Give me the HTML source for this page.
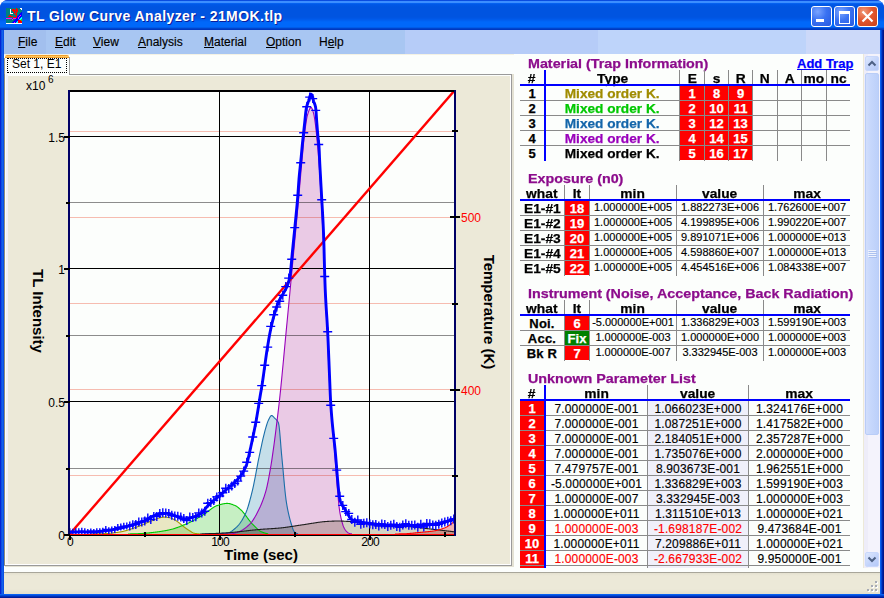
<!DOCTYPE html><html><head><meta charset="utf-8"><style>html,body{margin:0;padding:0;width:884px;height:598px;overflow:hidden;background:#fff}</style></head><body><div style="position:relative;width:884px;height:598px;overflow:hidden"><div style="position:absolute;left:0;top:0;width:884px;height:598px;background:#0831d9;border-radius:8px 8px 0 0;overflow:hidden"><div style="position:absolute;left:0;top:0;width:884px;height:30px;background:linear-gradient(to bottom,#0a4ce0 0px,#0a4ce0 1px,#3c8eff 1px,#3c8eff 3px,#0a6af8 3px,#0058e8 4px,#0054e0 7px,#0054e0 17px,#0058e8 19px,#0068fa 22px,#0068fa 27px,#0050d8 28px,#0038c0 29px,#0038c0 30px);"></div><div style="position:absolute;left:0px;top:30px;width:4px;height:568px;background:linear-gradient(to right,#0019cf,#0831d9 1px,#166aee 2px,#0848e0 4px);"></div><div style="position:absolute;left:880px;top:30px;width:4px;height:568px;background:linear-gradient(to right,#0860f0 0px,#0860f0 1px,#0044d0 1px,#0044d0 2px,#0024a8 2px,#0024a8 3px,#001888 3px);"></div><div style="position:absolute;left:0px;top:594px;width:884px;height:4px;background:linear-gradient(to bottom,#0860f0 0px,#0860f0 1px,#0048d8 1px,#0048d8 2px,#0030b8 2px,#0030b8 3px,#001c98 3px);"></div></div><svg style="position:absolute;left:6px;top:8px" width="16" height="16" shape-rendering="crispEdges"><rect width="16" height="16" fill="#008080"/><rect x="10" y="0" width="1" height="1" fill="#ff0000"/><rect x="14" y="0" width="1" height="1" fill="#ffffff"/><rect x="15" y="0" width="1" height="1" fill="#ffffff"/><rect x="4" y="1" width="1" height="1" fill="#ffffff"/><rect x="6" y="1" width="1" height="1" fill="#ff0000"/><rect x="7" y="1" width="1" height="1" fill="#ff0000"/><rect x="8" y="1" width="1" height="1" fill="#ff0000"/><rect x="10" y="1" width="1" height="1" fill="#ff0000"/><rect x="11" y="1" width="1" height="1" fill="#ff0000"/><rect x="15" y="1" width="1" height="1" fill="#ffffff"/><rect x="4" y="2" width="1" height="1" fill="#ffffff"/><rect x="6" y="2" width="1" height="1" fill="#ff0000"/><rect x="7" y="2" width="1" height="1" fill="#ff0000"/><rect x="8" y="2" width="1" height="1" fill="#ff0000"/><rect x="9" y="2" width="1" height="1" fill="#ff0000"/><rect x="10" y="2" width="1" height="1" fill="#ff0000"/><rect x="11" y="2" width="1" height="1" fill="#ff0000"/><rect x="4" y="3" width="1" height="1" fill="#ffffff"/><rect x="7" y="3" width="1" height="1" fill="#ff0000"/><rect x="8" y="3" width="1" height="1" fill="#ff0000"/><rect x="10" y="3" width="1" height="1" fill="#ff0000"/><rect x="11" y="3" width="1" height="1" fill="#ff0000"/><rect x="4" y="4" width="1" height="1" fill="#ffffff"/><rect x="8" y="4" width="1" height="1" fill="#ff0000"/><rect x="9" y="4" width="1" height="1" fill="#ff0000"/><rect x="10" y="4" width="1" height="1" fill="#ff0000"/><rect x="15" y="4" width="1" height="1" fill="#0000ff"/><rect x="4" y="5" width="1" height="1" fill="#ffffff"/><rect x="5" y="5" width="1" height="1" fill="#ffffff"/><rect x="6" y="5" width="1" height="1" fill="#ffffff"/><rect x="8" y="5" width="1" height="1" fill="#ff0000"/><rect x="10" y="5" width="1" height="1" fill="#ff0000"/><rect x="14" y="5" width="1" height="1" fill="#0000ff"/><rect x="15" y="5" width="1" height="1" fill="#0000ff"/><rect x="9" y="6" width="1" height="1" fill="#ff0000"/><rect x="10" y="6" width="1" height="1" fill="#ff0000"/><rect x="13" y="6" width="1" height="1" fill="#0000ff"/><rect x="14" y="6" width="1" height="1" fill="#0000ff"/><rect x="15" y="6" width="1" height="1" fill="#0000ff"/><rect x="3" y="7" width="1" height="1" fill="#ff0000"/><rect x="4" y="7" width="1" height="1" fill="#ff0000"/><rect x="10" y="7" width="1" height="1" fill="#ff0000"/><rect x="12" y="7" width="1" height="1" fill="#0000ff"/><rect x="13" y="7" width="1" height="1" fill="#0000ff"/><rect x="14" y="7" width="1" height="1" fill="#ff00ff"/><rect x="15" y="7" width="1" height="1" fill="#0000ff"/><rect x="2" y="8" width="1" height="1" fill="#ff0000"/><rect x="3" y="8" width="1" height="1" fill="#ff0000"/><rect x="4" y="8" width="1" height="1" fill="#ff0000"/><rect x="5" y="8" width="1" height="1" fill="#ff0000"/><rect x="6" y="8" width="1" height="1" fill="#ff0000"/><rect x="10" y="8" width="1" height="1" fill="#ff0000"/><rect x="11" y="8" width="1" height="1" fill="#0000ff"/><rect x="12" y="8" width="1" height="1" fill="#0000ff"/><rect x="13" y="8" width="1" height="1" fill="#ff00ff"/><rect x="14" y="8" width="1" height="1" fill="#0000ff"/><rect x="15" y="8" width="1" height="1" fill="#0000ff"/><rect x="7" y="9" width="1" height="1" fill="#ff0000"/><rect x="8" y="9" width="1" height="1" fill="#ff0000"/><rect x="9" y="9" width="1" height="1" fill="#ff0000"/><rect x="10" y="9" width="1" height="1" fill="#ff0000"/><rect x="11" y="9" width="1" height="1" fill="#0000ff"/><rect x="12" y="9" width="1" height="1" fill="#ff00ff"/><rect x="13" y="9" width="1" height="1" fill="#0000ff"/><rect x="14" y="9" width="1" height="1" fill="#0000ff"/><rect x="15" y="9" width="1" height="1" fill="#00ffff"/><rect x="0" y="10" width="1" height="1" fill="#ff00ff"/><rect x="1" y="10" width="1" height="1" fill="#ff00ff"/><rect x="2" y="10" width="1" height="1" fill="#ff00ff"/><rect x="3" y="10" width="1" height="1" fill="#ff00ff"/><rect x="4" y="10" width="1" height="1" fill="#ff00ff"/><rect x="5" y="10" width="1" height="1" fill="#ff00ff"/><rect x="7" y="10" width="1" height="1" fill="#ff00ff"/><rect x="8" y="10" width="1" height="1" fill="#ff00ff"/><rect x="9" y="10" width="1" height="1" fill="#ff00ff"/><rect x="10" y="10" width="1" height="1" fill="#0000ff"/><rect x="11" y="10" width="1" height="1" fill="#0000ff"/><rect x="12" y="10" width="1" height="1" fill="#ff00ff"/><rect x="13" y="10" width="1" height="1" fill="#0000ff"/><rect x="14" y="10" width="1" height="1" fill="#00ffff"/><rect x="15" y="10" width="1" height="1" fill="#00ffff"/><rect x="6" y="11" width="1" height="1" fill="#ff00ff"/><rect x="9" y="11" width="1" height="1" fill="#0000ff"/><rect x="10" y="11" width="1" height="1" fill="#0000ff"/><rect x="11" y="11" width="1" height="1" fill="#0000ff"/><rect x="12" y="11" width="1" height="1" fill="#0000ff"/><rect x="13" y="11" width="1" height="1" fill="#00ffff"/><rect x="14" y="11" width="1" height="1" fill="#00ffff"/><rect x="15" y="11" width="1" height="1" fill="#00ff00"/><rect x="8" y="12" width="1" height="1" fill="#0000ff"/><rect x="9" y="12" width="1" height="1" fill="#0000ff"/><rect x="10" y="12" width="1" height="1" fill="#0000ff"/><rect x="11" y="12" width="1" height="1" fill="#0000ff"/><rect x="12" y="12" width="1" height="1" fill="#ff0000"/><rect x="13" y="12" width="1" height="1" fill="#ff0000"/><rect x="14" y="12" width="1" height="1" fill="#ff0000"/><rect x="15" y="12" width="1" height="1" fill="#00ff00"/><rect x="7" y="13" width="1" height="1" fill="#0000ff"/><rect x="8" y="13" width="1" height="1" fill="#0000ff"/><rect x="9" y="13" width="1" height="1" fill="#0000ff"/><rect x="10" y="13" width="1" height="1" fill="#0000ff"/><rect x="11" y="13" width="1" height="1" fill="#00ffff"/><rect x="12" y="13" width="1" height="1" fill="#ff0000"/><rect x="13" y="13" width="1" height="1" fill="#ff0000"/><rect x="14" y="13" width="1" height="1" fill="#ff0000"/><rect x="15" y="13" width="1" height="1" fill="#ff0000"/><rect x="6" y="14" width="1" height="1" fill="#0000ff"/><rect x="7" y="14" width="1" height="1" fill="#0000ff"/><rect x="8" y="14" width="1" height="1" fill="#ff00ff"/><rect x="9" y="14" width="1" height="1" fill="#0000ff"/><rect x="10" y="14" width="1" height="1" fill="#00ffff"/><rect x="11" y="14" width="1" height="1" fill="#00ffff"/><rect x="12" y="14" width="1" height="1" fill="#ff0000"/><rect x="13" y="14" width="1" height="1" fill="#ff0000"/><rect x="14" y="14" width="1" height="1" fill="#ff0000"/><rect x="15" y="14" width="1" height="1" fill="#ff0000"/><rect x="0" y="15" width="1" height="1" fill="#ffffff"/><rect x="1" y="15" width="1" height="1" fill="#ffffff"/><rect x="2" y="15" width="1" height="1" fill="#ffffff"/><rect x="3" y="15" width="1" height="1" fill="#ffffff"/><rect x="4" y="15" width="1" height="1" fill="#ffffff"/><rect x="5" y="15" width="1" height="1" fill="#ffffff"/><rect x="6" y="15" width="1" height="1" fill="#ffffff"/><rect x="7" y="15" width="1" height="1" fill="#ffffff"/><rect x="8" y="15" width="1" height="1" fill="#ffffff"/><rect x="9" y="15" width="1" height="1" fill="#ffffff"/><rect x="10" y="15" width="1" height="1" fill="#ffffff"/><rect x="11" y="15" width="1" height="1" fill="#ffffff"/><rect x="12" y="15" width="1" height="1" fill="#ffffff"/><rect x="13" y="15" width="1" height="1" fill="#ffffff"/><rect x="14" y="15" width="1" height="1" fill="#ffffff"/><rect x="15" y="15" width="1" height="1" fill="#ffffff"/></svg><div style="position:absolute;left:27px;top:8px;white-space:nowrap;font-family:'Liberation Sans',sans-serif;font-weight:bold;font-size:14px;color:#fff;letter-spacing:0.4px;line-height:16px;text-shadow:1px 1px 0 #0a1e9a;">TL Glow Curve Analyzer - 21MOK.tlp</div><div style="position:absolute;left:811px;top:6px;width:19px;height:19px;border:1px solid #fff;border-radius:3px;background:radial-gradient(circle at 30% 25%,#7aa4ff 0,#3a72f2 45%,#2759e0 100%);"></div><div style="position:absolute;left:834px;top:6px;width:19px;height:19px;border:1px solid #fff;border-radius:3px;background:radial-gradient(circle at 30% 25%,#7aa4ff 0,#3a72f2 45%,#2759e0 100%);"></div><div style="position:absolute;left:857px;top:6px;width:19px;height:19px;border:1px solid #fff;border-radius:3px;background:radial-gradient(circle at 30% 25%,#f09a7a 0,#e2572f 45%,#c9401a 100%);"></div><div style="position:absolute;left:816px;top:19px;width:8px;height:3px;background:#fff;"></div><div style="position:absolute;left:839px;top:11px;width:9px;height:9px;border:1px solid #fff;border-top:3px solid #fff;"></div><svg style="position:absolute;left:857px;top:6px" width="21" height="21"><path d="M5.5,5.5 L15.5,15.5 M15.5,5.5 L5.5,15.5" stroke="#fff" stroke-width="2.2"/></svg><div style="position:absolute;left:4px;top:30px;width:876px;height:564px;background:#fcfefc;"></div><div style="position:absolute;left:4px;top:30px;width:401px;height:24px;background:#a8c6f2;"></div><div style="position:absolute;left:405px;top:30px;width:193px;height:24px;background:#b6ccf8;"></div><div style="position:absolute;left:598px;top:30px;width:208px;height:24px;background:#bed4fa;"></div><div style="position:absolute;left:806px;top:30px;width:74px;height:24px;background:#ccd9f9;"></div><div style="position:absolute;left:4px;top:30px;width:42px;height:24px;background:#a2bfee;"></div><div style="position:absolute;left:18px;top:35px;white-space:nowrap;font-family:'Liberation Sans',sans-serif;font-size:12px;color:#000;line-height:14px;-webkit-text-stroke:0.15px #000;"><u>F</u>ile</div><div style="position:absolute;left:55px;top:35px;white-space:nowrap;font-family:'Liberation Sans',sans-serif;font-size:12px;color:#000;line-height:14px;-webkit-text-stroke:0.15px #000;"><u>E</u>dit</div><div style="position:absolute;left:93px;top:35px;white-space:nowrap;font-family:'Liberation Sans',sans-serif;font-size:12px;color:#000;line-height:14px;-webkit-text-stroke:0.15px #000;"><u>V</u>iew</div><div style="position:absolute;left:138px;top:35px;white-space:nowrap;font-family:'Liberation Sans',sans-serif;font-size:12px;color:#000;line-height:14px;-webkit-text-stroke:0.15px #000;"><u>A</u>nalysis</div><div style="position:absolute;left:204px;top:35px;white-space:nowrap;font-family:'Liberation Sans',sans-serif;font-size:12px;color:#000;line-height:14px;-webkit-text-stroke:0.15px #000;"><u>M</u>aterial</div><div style="position:absolute;left:266px;top:35px;white-space:nowrap;font-family:'Liberation Sans',sans-serif;font-size:12px;color:#000;line-height:14px;-webkit-text-stroke:0.15px #000;"><u>O</u>ption</div><div style="position:absolute;left:319px;top:35px;white-space:nowrap;font-family:'Liberation Sans',sans-serif;font-size:12px;color:#000;line-height:14px;-webkit-text-stroke:0.15px #000;">H<u>e</u>lp</div><div style="position:absolute;left:4px;top:54px;width:876px;height:1px;background:#f4f2e4;"></div><div style="position:absolute;left:5px;top:55px;width:64px;height:3px;background:#f0a030;border-radius:2px 2px 0 0;"></div><div style="position:absolute;left:5px;top:56px;width:64px;height:1px;background:#ffc860;"></div><div style="position:absolute;left:4px;top:58px;width:1px;height:17px;background:#a0a090;"></div><div style="position:absolute;left:69px;top:57px;width:1px;height:17px;background:#a0a0a0;"></div><div style="position:absolute;left:69px;top:74px;width:443px;height:1px;background:#9a9a9a;"></div><div style="position:absolute;left:7px;top:58px;width:58px;height:13px;border:1px dotted #000;"></div><div style="position:absolute;left:12px;top:58px;white-space:nowrap;font-family:'Liberation Sans',sans-serif;font-size:12px;color:#000;line-height:13px;">Set 1, E1</div><div style="position:absolute;left:4px;top:74px;width:1px;height:492px;background:#8c8c80;"></div><div style="position:absolute;left:6px;top:75px;width:2px;height:490px;background:#f2f2f8;"></div><div style="position:absolute;left:8px;top:76px;width:503px;height:489px;background:#ece9d8;"></div><div style="position:absolute;left:511px;top:74px;width:1px;height:492px;background:#9a9a9a;"></div><div style="position:absolute;left:510px;top:75px;width:1px;height:490px;background:#ffffff;"></div><div style="position:absolute;left:5px;top:564px;width:506px;height:1px;background:#ffffff;"></div><div style="position:absolute;left:4px;top:565px;width:508px;height:1px;background:#9a9a9a;"></div><div style="position:absolute;left:512px;top:74px;width:2px;height:493px;background:#e4e2d4;"></div><div style="position:absolute;left:5px;top:566px;width:509px;height:1px;background:#e4e2d4;"></div><div style="position:absolute;left:4px;top:572px;width:876px;height:1px;background:#a8a69a;"></div><div style="position:absolute;left:4px;top:573px;width:876px;height:21px;background:linear-gradient(to bottom,#e4e1d0,#ece9d8 3px,#ece9d8 16px,#e2dfce 21px);"></div><div style="position:absolute;left:876px;top:582px;width:2px;height:2px;background:#ffffff;"></div><div style="position:absolute;left:875px;top:581px;width:2px;height:2px;background:#a6aab4;"></div><div style="position:absolute;left:872px;top:586px;width:2px;height:2px;background:#ffffff;"></div><div style="position:absolute;left:871px;top:585px;width:2px;height:2px;background:#a6aab4;"></div><div style="position:absolute;left:876px;top:586px;width:2px;height:2px;background:#ffffff;"></div><div style="position:absolute;left:875px;top:585px;width:2px;height:2px;background:#a6aab4;"></div><div style="position:absolute;left:868px;top:590px;width:2px;height:2px;background:#ffffff;"></div><div style="position:absolute;left:867px;top:589px;width:2px;height:2px;background:#a6aab4;"></div><div style="position:absolute;left:872px;top:590px;width:2px;height:2px;background:#ffffff;"></div><div style="position:absolute;left:871px;top:589px;width:2px;height:2px;background:#a6aab4;"></div><div style="position:absolute;left:876px;top:590px;width:2px;height:2px;background:#ffffff;"></div><div style="position:absolute;left:875px;top:589px;width:2px;height:2px;background:#a6aab4;"></div><svg style="position:absolute;left:0;top:0" width="884" height="598" viewBox="0 0 884 598"><defs><clipPath id="pc"><rect x="70" y="92" width="384" height="443"/></clipPath></defs><rect x="68" y="90" width="388" height="446" fill="#fcfefc"/><g clip-path="url(#pc)"><rect x="68" y="90" width="388" height="446" fill="#fcfefc"/><g shape-rendering="crispEdges"><rect x="70" y="131" width="384" height="1" fill="#f6bcb0"/><rect x="70" y="217" width="384" height="1" fill="#f6bcb0"/><rect x="70" y="303" width="384" height="1" fill="#f6bcb0"/><rect x="70" y="389" width="384" height="1" fill="#f6bcb0"/><rect x="70" y="475" width="384" height="1" fill="#f6bcb0"/><rect x="70" y="202" width="384" height="1" fill="#8c8c8c"/><rect x="70" y="335" width="384" height="1" fill="#8c8c8c"/><rect x="70" y="468" width="384" height="1" fill="#8c8c8c"/><rect x="70" y="136" width="384" height="1" fill="#000"/><rect x="70" y="268" width="384" height="1" fill="#000"/><rect x="70" y="401" width="384" height="1" fill="#000"/><rect x="219" y="92" width="1" height="443" fill="#000"/><rect x="369" y="92" width="1" height="443" fill="#000"/></g><path d="M90.0,535.0 L90.0,534.00 L90.5,533.99 L91.0,533.97 L91.5,533.96 L92.0,533.95 L92.5,533.94 L93.0,533.93 L93.5,533.92 L94.0,533.91 L94.5,533.90 L95.0,533.88 L95.5,533.87 L96.0,533.86 L96.5,533.85 L97.0,533.84 L97.5,533.83 L98.0,533.82 L98.5,533.81 L99.0,533.79 L99.5,533.78 L100.0,533.77 L100.5,533.76 L101.0,533.74 L101.5,533.73 L102.0,533.71 L102.5,533.69 L103.0,533.68 L103.5,533.66 L104.0,533.64 L104.5,533.62 L105.0,533.60 L105.5,533.58 L106.0,533.55 L106.5,533.52 L107.0,533.49 L107.5,533.46 L108.0,533.43 L108.5,533.39 L109.0,533.35 L109.5,533.30 L110.0,533.26 L110.5,533.21 L111.0,533.16 L111.5,533.11 L112.0,533.06 L112.5,533.01 L113.0,532.95 L113.5,532.89 L114.0,532.83 L114.5,532.77 L115.0,532.70 L115.5,532.64 L116.0,532.57 L116.5,532.50 L117.0,532.43 L117.5,532.36 L118.0,532.29 L118.5,532.21 L119.0,532.14 L119.5,532.06 L120.0,531.98 L120.5,531.90 L121.0,531.81 L121.5,531.72 L122.0,531.61 L122.5,531.51 L123.0,531.39 L123.5,531.28 L124.0,531.15 L124.5,531.02 L125.0,530.89 L125.5,530.75 L126.0,530.61 L126.5,530.47 L127.0,530.32 L127.5,530.17 L128.0,530.01 L128.5,529.85 L129.0,529.69 L129.5,529.53 L130.0,529.36 L130.5,529.20 L131.0,529.03 L131.5,528.86 L132.0,528.68 L132.5,528.51 L133.0,528.34 L133.5,528.17 L134.0,527.99 L134.5,527.82 L135.0,527.64 L135.5,527.47 L136.0,527.30 L136.5,527.13 L137.0,526.95 L137.5,526.76 L138.0,526.58 L138.5,526.39 L139.0,526.19 L139.5,525.99 L140.0,525.79 L140.5,525.59 L141.0,525.38 L141.5,525.17 L142.0,524.96 L142.5,524.75 L143.0,524.53 L143.5,524.32 L144.0,524.10 L144.5,523.88 L145.0,523.67 L145.5,523.45 L146.0,523.23 L146.5,523.01 L147.0,522.79 L147.5,522.58 L148.0,522.36 L148.5,522.14 L149.0,521.93 L149.5,521.72 L150.0,521.51 L150.5,521.30 L151.0,521.10 L151.5,520.89 L152.0,520.68 L152.5,520.46 L153.0,520.23 L153.5,520.01 L154.0,519.78 L154.5,519.56 L155.0,519.35 L155.5,519.14 L156.0,518.94 L156.5,518.76 L157.0,518.59 L157.5,518.43 L158.0,518.30 L158.5,518.18 L159.0,518.05 L159.5,517.92 L160.0,517.80 L160.5,517.68 L161.0,517.57 L161.5,517.46 L162.0,517.37 L162.5,517.28 L163.0,517.21 L163.5,517.16 L164.0,517.12 L164.5,517.10 L165.0,517.10 L165.5,517.12 L166.0,517.16 L166.5,517.20 L167.0,517.27 L167.5,517.34 L168.0,517.42 L168.5,517.51 L169.0,517.60 L169.5,517.70 L170.0,517.80 L170.5,517.92 L171.0,518.07 L171.5,518.25 L172.0,518.46 L172.5,518.69 L173.0,518.93 L173.5,519.20 L174.0,519.47 L174.5,519.75 L175.0,520.04 L175.5,520.33 L176.0,520.62 L176.5,520.92 L177.0,521.25 L177.5,521.60 L178.0,521.97 L178.5,522.35 L179.0,522.75 L179.5,523.15 L180.0,523.57 L180.5,523.98 L181.0,524.41 L181.5,524.83 L182.0,525.25 L182.5,525.66 L183.0,526.07 L183.5,526.47 L184.0,526.85 L184.5,527.23 L185.0,527.59 L185.5,527.95 L186.0,528.32 L186.5,528.68 L187.0,529.03 L187.5,529.38 L188.0,529.73 L188.5,530.06 L189.0,530.39 L189.5,530.70 L190.0,531.00 L190.5,531.30 L191.0,531.61 L191.5,531.92 L192.0,532.22 L192.5,532.50 L193.0,532.76 L193.5,532.98 L194.0,533.17 L194.5,533.30 L195.0,533.40 L195.5,533.48 L196.0,533.55 L196.5,533.62 L197.0,533.68 L197.5,533.73 L198.0,533.78 L198.5,533.83 L199.0,533.88 L199.5,533.94 L200.0,534.00 L200.0,534.00 L200.0,535.0 Z" fill="#ece8c6" style="mix-blend-mode:multiply"/><path d="M128.0,535.0 L128.0,534.00 L128.5,533.98 L129.0,533.97 L129.5,533.95 L130.0,533.94 L130.5,533.92 L131.0,533.91 L131.5,533.89 L132.0,533.88 L132.5,533.87 L133.0,533.85 L133.5,533.84 L134.0,533.82 L134.5,533.81 L135.0,533.79 L135.5,533.78 L136.0,533.76 L136.5,533.74 L137.0,533.73 L137.5,533.71 L138.0,533.69 L138.5,533.67 L139.0,533.65 L139.5,533.62 L140.0,533.60 L140.5,533.57 L141.0,533.55 L141.5,533.52 L142.0,533.49 L142.5,533.45 L143.0,533.42 L143.5,533.38 L144.0,533.34 L144.5,533.30 L145.0,533.26 L145.5,533.22 L146.0,533.17 L146.5,533.13 L147.0,533.08 L147.5,533.03 L148.0,532.98 L148.5,532.93 L149.0,532.88 L149.5,532.83 L150.0,532.77 L150.5,532.72 L151.0,532.66 L151.5,532.61 L152.0,532.55 L152.5,532.49 L153.0,532.44 L153.5,532.38 L154.0,532.32 L154.5,532.26 L155.0,532.20 L155.5,532.14 L156.0,532.08 L156.5,532.02 L157.0,531.95 L157.5,531.89 L158.0,531.82 L158.5,531.75 L159.0,531.68 L159.5,531.61 L160.0,531.54 L160.5,531.47 L161.0,531.39 L161.5,531.32 L162.0,531.24 L162.5,531.16 L163.0,531.07 L163.5,530.99 L164.0,530.91 L164.5,530.82 L165.0,530.73 L165.5,530.64 L166.0,530.54 L166.5,530.45 L167.0,530.35 L167.5,530.25 L168.0,530.14 L168.5,530.04 L169.0,529.93 L169.5,529.82 L170.0,529.71 L170.5,529.59 L171.0,529.47 L171.5,529.34 L172.0,529.20 L172.5,529.07 L173.0,528.92 L173.5,528.78 L174.0,528.62 L174.5,528.47 L175.0,528.31 L175.5,528.14 L176.0,527.97 L176.5,527.80 L177.0,527.63 L177.5,527.45 L178.0,527.27 L178.5,527.08 L179.0,526.89 L179.5,526.70 L180.0,526.51 L180.5,526.31 L181.0,526.11 L181.5,525.91 L182.0,525.71 L182.5,525.50 L183.0,525.29 L183.5,525.08 L184.0,524.87 L184.5,524.66 L185.0,524.44 L185.5,524.23 L186.0,524.01 L186.5,523.79 L187.0,523.57 L187.5,523.35 L188.0,523.13 L188.5,522.91 L189.0,522.69 L189.5,522.45 L190.0,522.22 L190.5,521.98 L191.0,521.73 L191.5,521.48 L192.0,521.22 L192.5,520.97 L193.0,520.70 L193.5,520.44 L194.0,520.16 L194.5,519.89 L195.0,519.61 L195.5,519.33 L196.0,519.05 L196.5,518.76 L197.0,518.48 L197.5,518.19 L198.0,517.89 L198.5,517.60 L199.0,517.30 L199.5,517.01 L200.0,516.71 L200.5,516.41 L201.0,516.11 L201.5,515.81 L202.0,515.51 L202.5,515.20 L203.0,514.90 L203.5,514.60 L204.0,514.29 L204.5,513.97 L205.0,513.63 L205.5,513.28 L206.0,512.91 L206.5,512.54 L207.0,512.17 L207.5,511.79 L208.0,511.40 L208.5,511.01 L209.0,510.62 L209.5,510.23 L210.0,509.85 L210.5,509.47 L211.0,509.09 L211.5,508.72 L212.0,508.36 L212.5,508.02 L213.0,507.68 L213.5,507.36 L214.0,507.05 L214.5,506.76 L215.0,506.49 L215.5,506.24 L216.0,506.01 L216.5,505.81 L217.0,505.63 L217.5,505.47 L218.0,505.31 L218.5,505.15 L219.0,505.00 L219.5,504.84 L220.0,504.69 L220.5,504.54 L221.0,504.40 L221.5,504.26 L222.0,504.13 L222.5,504.01 L223.0,503.90 L223.5,503.79 L224.0,503.70 L224.5,503.62 L225.0,503.55 L225.5,503.49 L226.0,503.45 L226.5,503.42 L227.0,503.40 L227.5,503.40 L228.0,503.43 L228.5,503.49 L229.0,503.56 L229.5,503.65 L230.0,503.77 L230.5,503.90 L231.0,504.04 L231.5,504.20 L232.0,504.38 L232.5,504.56 L233.0,504.75 L233.5,504.94 L234.0,505.15 L234.5,505.35 L235.0,505.56 L235.5,505.78 L236.0,506.04 L236.5,506.33 L237.0,506.66 L237.5,507.02 L238.0,507.40 L238.5,507.80 L239.0,508.22 L239.5,508.65 L240.0,509.10 L240.5,509.55 L241.0,510.00 L241.5,510.47 L242.0,510.98 L242.5,511.52 L243.0,512.08 L243.5,512.68 L244.0,513.29 L244.5,513.93 L245.0,514.58 L245.5,515.24 L246.0,515.92 L246.5,516.60 L247.0,517.28 L247.5,517.96 L248.0,518.64 L248.5,519.32 L249.0,519.98 L249.5,520.63 L250.0,521.27 L250.5,521.89 L251.0,522.48 L251.5,523.05 L252.0,523.59 L252.5,524.10 L253.0,524.61 L253.5,525.13 L254.0,525.64 L254.5,526.16 L255.0,526.66 L255.5,527.17 L256.0,527.66 L256.5,528.15 L257.0,528.62 L257.5,529.07 L258.0,529.51 L258.5,529.92 L259.0,530.31 L259.5,530.68 L260.0,531.02 L260.5,531.33 L261.0,531.60 L261.5,531.85 L262.0,532.06 L262.5,532.26 L263.0,532.45 L263.5,532.62 L264.0,532.78 L264.5,532.93 L265.0,533.07 L265.5,533.22 L266.0,533.35 L266.5,533.49 L267.0,533.64 L267.5,533.78 L268.0,533.94 L268.2,534.00 L268.2,535.0 Z" fill="#c9f0c6" style="mix-blend-mode:multiply"/><path d="M205.0,535.0 L205.0,534.00 L205.5,533.98 L206.0,533.97 L206.5,533.95 L207.0,533.94 L207.5,533.92 L208.0,533.91 L208.5,533.89 L209.0,533.87 L209.5,533.86 L210.0,533.84 L210.5,533.83 L211.0,533.81 L211.5,533.80 L212.0,533.78 L212.5,533.77 L213.0,533.75 L213.5,533.73 L214.0,533.72 L214.5,533.70 L215.0,533.68 L215.5,533.66 L216.0,533.64 L216.5,533.62 L217.0,533.60 L217.5,533.58 L218.0,533.56 L218.5,533.54 L219.0,533.52 L219.5,533.50 L220.0,533.48 L220.5,533.46 L221.0,533.44 L221.5,533.42 L222.0,533.39 L222.5,533.37 L223.0,533.34 L223.5,533.31 L224.0,533.28 L224.5,533.25 L225.0,533.21 L225.5,533.17 L226.0,533.13 L226.5,533.08 L227.0,533.03 L227.5,532.97 L228.0,532.88 L228.5,532.75 L229.0,532.58 L229.5,532.38 L230.0,532.15 L230.5,531.88 L231.0,531.59 L231.5,531.27 L232.0,530.93 L232.5,530.57 L233.0,530.19 L233.5,529.79 L234.0,529.38 L234.5,528.96 L235.0,528.53 L235.5,528.09 L236.0,527.65 L236.5,527.21 L237.0,526.74 L237.5,526.24 L238.0,525.71 L238.5,525.14 L239.0,524.53 L239.5,523.89 L240.0,523.22 L240.5,522.51 L241.0,521.77 L241.5,521.00 L242.0,520.19 L242.5,519.35 L243.0,518.47 L243.5,517.56 L244.0,516.62 L244.5,515.65 L245.0,514.64 L245.5,513.60 L246.0,512.48 L246.5,511.24 L247.0,509.88 L247.5,508.42 L248.0,506.87 L248.5,505.23 L249.0,503.51 L249.5,501.73 L250.0,499.88 L250.5,497.99 L251.0,496.06 L251.5,494.09 L252.0,492.10 L252.5,490.08 L253.0,487.93 L253.5,485.64 L254.0,483.23 L254.5,480.72 L255.0,478.13 L255.5,475.49 L256.0,472.81 L256.5,470.12 L257.0,467.44 L257.5,464.80 L258.0,462.21 L258.5,459.69 L259.0,457.27 L259.5,454.92 L260.0,452.56 L260.5,450.20 L261.0,447.84 L261.5,445.51 L262.0,443.20 L262.5,440.94 L263.0,438.74 L263.5,436.60 L264.0,434.54 L264.5,432.58 L265.0,430.71 L265.5,428.94 L266.0,427.20 L266.5,425.50 L267.0,423.90 L267.5,422.42 L268.0,421.11 L268.5,420.00 L269.0,418.97 L269.5,417.95 L270.0,417.00 L270.5,416.22 L271.0,415.69 L271.5,415.50 L272.0,415.62 L272.5,415.93 L273.0,416.38 L273.5,416.92 L274.0,417.48 L274.5,418.00 L275.0,418.46 L275.5,418.89 L276.0,419.33 L276.5,419.81 L277.0,420.37 L277.5,421.05 L278.0,421.89 L278.5,422.96 L279.0,425.53 L279.5,429.80 L280.0,435.26 L280.5,441.39 L281.0,447.68 L281.5,453.62 L282.0,458.82 L282.5,464.09 L283.0,469.57 L283.5,475.12 L284.0,480.63 L284.5,485.95 L285.0,490.97 L285.5,495.55 L286.0,499.57 L286.5,502.92 L287.0,505.86 L287.5,508.58 L288.0,511.11 L288.5,513.45 L289.0,515.63 L289.5,517.66 L290.0,519.56 L290.5,521.34 L291.0,523.03 L291.5,524.72 L292.0,526.38 L292.5,527.95 L293.0,529.36 L293.5,530.55 L294.0,531.44 L294.5,531.99 L295.0,532.39 L295.5,532.73 L296.0,533.00 L296.5,533.25 L297.0,533.48 L297.5,533.73 L298.0,534.00 L298.0,534.00 L298.0,535.0 Z" fill="#c8e0ec" style="mix-blend-mode:multiply"/><path d="M205.0,535.0 L205.0,534.00 L205.5,534.00 L206.0,534.00 L206.5,534.00 L207.0,534.00 L207.5,534.00 L208.0,534.00 L208.5,534.00 L209.0,534.00 L209.5,534.00 L210.0,534.00 L210.5,534.00 L211.0,534.00 L211.5,534.00 L212.0,534.00 L212.5,534.00 L213.0,534.00 L213.5,534.00 L214.0,534.00 L214.5,534.00 L215.0,534.00 L215.5,534.00 L216.0,534.00 L216.5,534.00 L217.0,534.00 L217.5,534.00 L218.0,534.00 L218.5,534.00 L219.0,534.00 L219.5,534.00 L220.0,534.00 L220.5,534.00 L221.0,534.00 L221.5,534.00 L222.0,534.00 L222.5,534.00 L223.0,534.00 L223.5,534.00 L224.0,534.00 L224.5,534.00 L225.0,534.00 L225.5,534.00 L226.0,534.00 L226.5,534.00 L227.0,534.00 L227.5,534.00 L228.0,534.00 L228.5,534.00 L229.0,534.00 L229.5,534.00 L230.0,533.99 L230.5,533.96 L231.0,533.91 L231.5,533.85 L232.0,533.77 L232.5,533.67 L233.0,533.57 L233.5,533.45 L234.0,533.31 L234.5,533.17 L235.0,533.02 L235.5,532.87 L236.0,532.70 L236.5,532.53 L237.0,532.36 L237.5,532.19 L238.0,532.01 L238.5,531.84 L239.0,531.65 L239.5,531.46 L240.0,531.24 L240.5,531.01 L241.0,530.76 L241.5,530.50 L242.0,530.22 L242.5,529.93 L243.0,529.62 L243.5,529.30 L244.0,528.96 L244.5,528.61 L245.0,528.25 L245.5,527.87 L246.0,527.48 L246.5,527.07 L247.0,526.66 L247.5,526.23 L248.0,525.78 L248.5,525.33 L249.0,524.86 L249.5,524.39 L250.0,523.90 L250.5,523.38 L251.0,522.82 L251.5,522.22 L252.0,521.57 L252.5,520.88 L253.0,520.16 L253.5,519.40 L254.0,518.61 L254.5,517.79 L255.0,516.94 L255.5,516.06 L256.0,515.15 L256.5,514.23 L257.0,513.28 L257.5,512.31 L258.0,511.32 L258.5,510.32 L259.0,509.30 L259.5,508.27 L260.0,507.21 L260.5,506.11 L261.0,504.96 L261.5,503.78 L262.0,502.55 L262.5,501.27 L263.0,499.93 L263.5,498.53 L264.0,497.08 L264.5,495.55 L265.0,493.96 L265.5,492.29 L266.0,490.54 L266.5,488.63 L267.0,486.52 L267.5,484.24 L268.0,481.81 L268.5,479.26 L269.0,476.60 L269.5,473.85 L270.0,471.05 L270.5,468.20 L271.0,465.25 L271.5,462.12 L272.0,458.84 L272.5,455.44 L273.0,451.95 L273.5,448.38 L274.0,444.77 L274.5,441.05 L275.0,437.19 L275.5,433.23 L276.0,429.20 L276.5,425.14 L277.0,421.08 L277.5,417.02 L278.0,412.93 L278.5,408.76 L279.0,404.46 L279.5,400.00 L280.0,395.36 L280.5,390.57 L281.0,385.66 L281.5,380.63 L282.0,375.50 L282.5,370.30 L283.0,365.04 L283.5,359.73 L284.0,354.40 L284.5,349.05 L285.0,343.72 L285.5,338.41 L286.0,333.14 L286.5,327.92 L287.0,322.70 L287.5,317.48 L288.0,312.24 L288.5,307.00 L289.0,301.74 L289.5,296.48 L290.0,291.20 L290.5,285.92 L291.0,280.62 L291.5,275.32 L292.0,270.00 L292.5,264.68 L293.0,259.37 L293.5,254.05 L294.0,248.73 L294.5,243.40 L295.0,238.06 L295.5,232.71 L296.0,227.33 L296.5,221.93 L297.0,216.50 L297.5,211.04 L298.0,205.54 L298.5,200.00 L299.0,194.35 L299.5,188.57 L300.0,182.72 L300.5,176.87 L301.0,171.09 L301.5,165.45 L302.0,160.00 L302.5,154.60 L303.0,149.14 L303.5,143.80 L304.0,138.72 L304.5,134.07 L305.0,130.00 L305.5,126.32 L306.0,122.81 L306.5,119.65 L307.0,116.99 L307.5,115.00 L308.0,113.41 L308.5,111.89 L309.0,110.50 L309.5,109.30 L310.0,108.34 L310.5,107.69 L311.0,107.41 L311.5,107.63 L312.0,108.45 L312.5,109.73 L313.0,111.30 L313.5,113.00 L314.0,115.13 L314.5,117.98 L315.0,121.33 L315.5,125.00 L316.0,129.21 L316.5,134.14 L317.0,139.50 L317.5,145.00 L318.0,150.59 L318.5,156.52 L319.0,163.00 L319.5,170.24 L320.0,178.18 L320.5,186.57 L321.0,195.27 L321.5,204.47 L322.0,214.09 L322.5,223.95 L323.0,234.07 L323.5,245.46 L324.0,259.57 L324.5,274.67 L325.0,288.00 L325.5,298.58 L326.0,307.87 L326.5,316.70 L327.0,325.92 L327.5,336.39 L328.0,348.24 L328.5,360.48 L329.0,372.00 L329.5,382.84 L330.0,393.16 L330.5,402.00 L331.0,409.34 L331.5,415.90 L332.0,421.87 L332.5,427.46 L333.0,432.87 L333.5,438.30 L334.0,443.94 L334.5,450.00 L335.0,456.57 L335.5,463.48 L336.0,470.50 L336.5,477.41 L337.0,483.99 L337.5,490.00 L338.0,495.69 L338.5,501.17 L339.0,506.07 L339.5,510.00 L340.0,513.08 L340.5,515.73 L341.0,518.03 L341.5,520.05 L342.0,521.88 L342.5,523.62 L343.0,525.24 L343.5,526.67 L344.0,527.87 L344.5,528.80 L345.0,529.54 L345.5,530.24 L346.0,530.87 L346.5,531.45 L347.0,531.96 L347.5,532.40 L348.0,532.78 L348.5,533.08 L349.0,533.30 L349.5,533.46 L350.0,533.59 L350.5,533.70 L351.0,533.80 L351.5,533.89 L352.0,534.00 L352.0,534.00 L352.0,535.0 Z" fill="#edcbe8" style="mix-blend-mode:multiply"/><path d="M200.0,535.0 L200.0,534.00 L200.5,533.98 L201.0,533.96 L201.5,533.94 L202.0,533.92 L202.5,533.90 L203.0,533.89 L203.5,533.87 L204.0,533.85 L204.5,533.83 L205.0,533.81 L205.5,533.80 L206.0,533.78 L206.5,533.76 L207.0,533.74 L207.5,533.73 L208.0,533.71 L208.5,533.69 L209.0,533.67 L209.5,533.66 L210.0,533.64 L210.5,533.62 L211.0,533.60 L211.5,533.59 L212.0,533.57 L212.5,533.55 L213.0,533.53 L213.5,533.51 L214.0,533.50 L214.5,533.48 L215.0,533.46 L215.5,533.44 L216.0,533.42 L216.5,533.40 L217.0,533.38 L217.5,533.36 L218.0,533.34 L218.5,533.32 L219.0,533.30 L219.5,533.27 L220.0,533.25 L220.5,533.23 L221.0,533.21 L221.5,533.18 L222.0,533.16 L222.5,533.13 L223.0,533.11 L223.5,533.08 L224.0,533.06 L224.5,533.03 L225.0,533.00 L225.5,532.97 L226.0,532.94 L226.5,532.91 L227.0,532.87 L227.5,532.84 L228.0,532.80 L228.5,532.77 L229.0,532.73 L229.5,532.69 L230.0,532.64 L230.5,532.60 L231.0,532.56 L231.5,532.51 L232.0,532.46 L232.5,532.42 L233.0,532.37 L233.5,532.32 L234.0,532.27 L234.5,532.22 L235.0,532.16 L235.5,532.11 L236.0,532.06 L236.5,532.00 L237.0,531.95 L237.5,531.89 L238.0,531.84 L238.5,531.78 L239.0,531.72 L239.5,531.67 L240.0,531.61 L240.5,531.55 L241.0,531.49 L241.5,531.43 L242.0,531.37 L242.5,531.31 L243.0,531.25 L243.5,531.19 L244.0,531.13 L244.5,531.07 L245.0,531.01 L245.5,530.95 L246.0,530.89 L246.5,530.83 L247.0,530.77 L247.5,530.71 L248.0,530.65 L248.5,530.60 L249.0,530.54 L249.5,530.48 L250.0,530.42 L250.5,530.36 L251.0,530.31 L251.5,530.25 L252.0,530.20 L252.5,530.14 L253.0,530.09 L253.5,530.03 L254.0,529.98 L254.5,529.93 L255.0,529.88 L255.5,529.83 L256.0,529.78 L256.5,529.73 L257.0,529.69 L257.5,529.64 L258.0,529.59 L258.5,529.55 L259.0,529.51 L259.5,529.47 L260.0,529.43 L260.5,529.39 L261.0,529.35 L261.5,529.31 L262.0,529.28 L262.5,529.24 L263.0,529.20 L263.5,529.17 L264.0,529.14 L264.5,529.10 L265.0,529.07 L265.5,529.04 L266.0,529.00 L266.5,528.97 L267.0,528.94 L267.5,528.91 L268.0,528.88 L268.5,528.85 L269.0,528.81 L269.5,528.78 L270.0,528.75 L270.5,528.72 L271.0,528.69 L271.5,528.66 L272.0,528.62 L272.5,528.59 L273.0,528.56 L273.5,528.52 L274.0,528.49 L274.5,528.45 L275.0,528.42 L275.5,528.38 L276.0,528.34 L276.5,528.30 L277.0,528.26 L277.5,528.22 L278.0,528.18 L278.5,528.14 L279.0,528.09 L279.5,528.05 L280.0,528.00 L280.5,527.95 L281.0,527.90 L281.5,527.85 L282.0,527.79 L282.5,527.74 L283.0,527.68 L283.5,527.62 L284.0,527.56 L284.5,527.50 L285.0,527.43 L285.5,527.37 L286.0,527.30 L286.5,527.23 L287.0,527.16 L287.5,527.09 L288.0,527.02 L288.5,526.95 L289.0,526.87 L289.5,526.80 L290.0,526.72 L290.5,526.65 L291.0,526.57 L291.5,526.49 L292.0,526.42 L292.5,526.34 L293.0,526.26 L293.5,526.18 L294.0,526.10 L294.5,526.03 L295.0,525.95 L295.5,525.87 L296.0,525.79 L296.5,525.71 L297.0,525.63 L297.5,525.56 L298.0,525.48 L298.5,525.40 L299.0,525.33 L299.5,525.25 L300.0,525.18 L300.5,525.10 L301.0,525.03 L301.5,524.96 L302.0,524.88 L302.5,524.81 L303.0,524.74 L303.5,524.67 L304.0,524.60 L304.5,524.53 L305.0,524.45 L305.5,524.37 L306.0,524.30 L306.5,524.22 L307.0,524.14 L307.5,524.06 L308.0,523.98 L308.5,523.90 L309.0,523.82 L309.5,523.74 L310.0,523.65 L310.5,523.57 L311.0,523.49 L311.5,523.41 L312.0,523.33 L312.5,523.25 L313.0,523.17 L313.5,523.09 L314.0,523.01 L314.5,522.93 L315.0,522.85 L315.5,522.77 L316.0,522.69 L316.5,522.62 L317.0,522.54 L317.5,522.47 L318.0,522.40 L318.5,522.33 L319.0,522.26 L319.5,522.19 L320.0,522.12 L320.5,522.06 L321.0,522.00 L321.5,521.94 L322.0,521.88 L322.5,521.82 L323.0,521.77 L323.5,521.72 L324.0,521.67 L324.5,521.62 L325.0,521.58 L325.5,521.54 L326.0,521.50 L326.5,521.46 L327.0,521.43 L327.5,521.40 L328.0,521.37 L328.5,521.34 L329.0,521.32 L329.5,521.29 L330.0,521.26 L330.5,521.24 L331.0,521.21 L331.5,521.19 L332.0,521.16 L332.5,521.14 L333.0,521.12 L333.5,521.10 L334.0,521.08 L334.5,521.06 L335.0,521.05 L335.5,521.03 L336.0,521.02 L336.5,521.01 L337.0,521.01 L337.5,521.00 L338.0,521.00 L338.5,521.00 L339.0,521.01 L339.5,521.02 L340.0,521.03 L340.5,521.04 L341.0,521.06 L341.5,521.08 L342.0,521.10 L342.5,521.12 L343.0,521.14 L343.5,521.17 L344.0,521.19 L344.5,521.22 L345.0,521.25 L345.5,521.27 L346.0,521.30 L346.5,521.33 L347.0,521.35 L347.5,521.38 L348.0,521.40 L348.5,521.43 L349.0,521.46 L349.5,521.48 L350.0,521.51 L350.5,521.54 L351.0,521.56 L351.5,521.59 L352.0,521.62 L352.5,521.65 L353.0,521.68 L353.5,521.71 L354.0,521.74 L354.5,521.77 L355.0,521.80 L355.5,521.84 L356.0,521.87 L356.5,521.90 L357.0,521.93 L357.5,521.97 L358.0,522.00 L358.5,522.04 L359.0,522.07 L359.5,522.11 L360.0,522.14 L360.5,522.18 L361.0,522.21 L361.5,522.25 L362.0,522.29 L362.5,522.32 L363.0,522.36 L363.5,522.40 L364.0,522.44 L364.5,522.47 L365.0,522.51 L365.5,522.55 L366.0,522.59 L366.5,522.63 L367.0,522.67 L367.5,522.71 L368.0,522.75 L368.5,522.79 L369.0,522.83 L369.5,522.87 L370.0,522.91 L370.5,522.95 L371.0,522.99 L371.5,523.03 L372.0,523.07 L372.5,523.11 L373.0,523.16 L373.5,523.20 L374.0,523.24 L374.5,523.28 L375.0,523.32 L375.5,523.36 L376.0,523.41 L376.5,523.45 L377.0,523.49 L377.5,523.53 L378.0,523.57 L378.5,523.62 L379.0,523.66 L379.5,523.70 L380.0,523.74 L380.5,523.78 L381.0,523.83 L381.5,523.87 L382.0,523.91 L382.5,523.96 L383.0,524.00 L383.5,524.05 L384.0,524.09 L384.5,524.14 L385.0,524.18 L385.5,524.23 L386.0,524.27 L386.5,524.32 L387.0,524.37 L387.5,524.41 L388.0,524.46 L388.5,524.51 L389.0,524.55 L389.5,524.60 L390.0,524.65 L390.5,524.70 L391.0,524.75 L391.5,524.79 L392.0,524.84 L392.5,524.89 L393.0,524.94 L393.5,524.99 L394.0,525.04 L394.5,525.09 L395.0,525.14 L395.5,525.19 L396.0,525.24 L396.5,525.29 L397.0,525.34 L397.5,525.39 L398.0,525.45 L398.5,525.50 L399.0,525.55 L399.5,525.60 L400.0,525.65 L400.5,525.70 L401.0,525.76 L401.5,525.81 L402.0,525.86 L402.5,525.91 L403.0,525.97 L403.5,526.02 L404.0,526.07 L404.5,526.12 L405.0,526.18 L405.5,526.23 L406.0,526.28 L406.5,526.34 L407.0,526.39 L407.5,526.45 L408.0,526.50 L408.5,526.55 L409.0,526.61 L409.5,526.66 L410.0,526.71 L410.5,526.77 L411.0,526.82 L411.5,526.88 L412.0,526.93 L412.5,526.98 L413.0,527.04 L413.5,527.09 L414.0,527.15 L414.5,527.20 L415.0,527.26 L415.5,527.31 L416.0,527.37 L416.5,527.42 L417.0,527.47 L417.5,527.53 L418.0,527.58 L418.5,527.64 L419.0,527.69 L419.5,527.75 L420.0,527.80 L420.5,527.85 L421.0,527.91 L421.5,527.96 L422.0,528.02 L422.5,528.07 L423.0,528.13 L423.5,528.19 L424.0,528.24 L424.5,528.30 L425.0,528.35 L425.5,528.41 L426.0,528.47 L426.5,528.52 L427.0,528.58 L427.5,528.64 L428.0,528.69 L428.5,528.75 L429.0,528.81 L429.5,528.87 L430.0,528.92 L430.5,528.98 L431.0,529.04 L431.5,529.10 L432.0,529.16 L432.5,529.22 L433.0,529.27 L433.5,529.33 L434.0,529.39 L434.5,529.45 L435.0,529.51 L435.5,529.57 L436.0,529.63 L436.5,529.69 L437.0,529.74 L437.5,529.80 L438.0,529.86 L438.5,529.92 L439.0,529.98 L439.5,530.04 L440.0,530.10 L440.5,530.16 L441.0,530.22 L441.5,530.28 L442.0,530.34 L442.5,530.40 L443.0,530.46 L443.5,530.52 L444.0,530.58 L444.5,530.64 L445.0,530.70 L445.5,530.76 L446.0,530.82 L446.5,530.88 L447.0,530.94 L447.5,531.00 L448.0,531.06 L448.5,531.11 L449.0,531.17 L449.5,531.23 L450.0,531.29 L450.5,531.35 L451.0,531.41 L451.5,531.47 L452.0,531.53 L452.5,531.59 L453.0,531.65 L453.5,531.71 L454.0,531.77 L454.5,531.82 L455.0,531.88 L455.5,531.94 L456.0,532.00 L456.0,532.00 L456.0,535.0 Z" fill="#d6d4c6" style="mix-blend-mode:multiply"/><path d="M395.0,535.0 L395.0,534.00 L395.5,533.99 L396.0,533.98 L396.5,533.97 L397.0,533.96 L397.5,533.95 L398.0,533.94 L398.5,533.93 L399.0,533.92 L399.5,533.91 L400.0,533.90 L400.5,533.89 L401.0,533.88 L401.5,533.87 L402.0,533.86 L402.5,533.85 L403.0,533.83 L403.5,533.82 L404.0,533.80 L404.5,533.78 L405.0,533.76 L405.5,533.74 L406.0,533.71 L406.5,533.68 L407.0,533.65 L407.5,533.62 L408.0,533.58 L408.5,533.54 L409.0,533.50 L409.5,533.46 L410.0,533.42 L410.5,533.37 L411.0,533.33 L411.5,533.28 L412.0,533.23 L412.5,533.18 L413.0,533.13 L413.5,533.08 L414.0,533.03 L414.5,532.98 L415.0,532.92 L415.5,532.87 L416.0,532.82 L416.5,532.76 L417.0,532.71 L417.5,532.66 L418.0,532.60 L418.5,532.55 L419.0,532.50 L419.5,532.45 L420.0,532.40 L420.5,532.35 L421.0,532.30 L421.5,532.25 L422.0,532.21 L422.5,532.16 L423.0,532.12 L423.5,532.07 L424.0,532.03 L424.5,531.99 L425.0,531.94 L425.5,531.90 L426.0,531.85 L426.5,531.81 L427.0,531.76 L427.5,531.72 L428.0,531.67 L428.5,531.62 L429.0,531.57 L429.5,531.51 L430.0,531.46 L430.5,531.40 L431.0,531.34 L431.5,531.28 L432.0,531.21 L432.5,531.15 L433.0,531.07 L433.5,531.00 L434.0,530.92 L434.5,530.83 L435.0,530.74 L435.5,530.64 L436.0,530.54 L436.5,530.43 L437.0,530.31 L437.5,530.19 L438.0,530.06 L438.5,529.93 L439.0,529.79 L439.5,529.65 L440.0,529.50 L440.5,529.34 L441.0,529.18 L441.5,529.02 L442.0,528.85 L442.5,528.67 L443.0,528.49 L443.5,528.31 L444.0,528.11 L444.5,527.92 L445.0,527.72 L445.5,527.50 L446.0,527.26 L446.5,527.00 L447.0,526.72 L447.5,526.42 L448.0,526.11 L448.5,525.79 L449.0,525.46 L449.5,525.11 L450.0,524.76 L450.5,524.40 L451.0,524.03 L451.5,523.66 L452.0,523.29 L452.5,522.92 L453.0,522.55 L453.5,522.15 L454.0,521.74 L454.5,521.30 L455.0,520.87 L455.5,520.43 L456.0,520.00 L456.0,520.00 L456.0,535.0 Z" fill="#f4b0b0" style="mix-blend-mode:multiply"/><path d="M90.0,534.00 L90.5,533.99 L91.0,533.97 L91.5,533.96 L92.0,533.95 L92.5,533.94 L93.0,533.93 L93.5,533.92 L94.0,533.91 L94.5,533.90 L95.0,533.88 L95.5,533.87 L96.0,533.86 L96.5,533.85 L97.0,533.84 L97.5,533.83 L98.0,533.82 L98.5,533.81 L99.0,533.79 L99.5,533.78 L100.0,533.77 L100.5,533.76 L101.0,533.74 L101.5,533.73 L102.0,533.71 L102.5,533.69 L103.0,533.68 L103.5,533.66 L104.0,533.64 L104.5,533.62 L105.0,533.60 L105.5,533.58 L106.0,533.55 L106.5,533.52 L107.0,533.49 L107.5,533.46 L108.0,533.43 L108.5,533.39 L109.0,533.35 L109.5,533.30 L110.0,533.26 L110.5,533.21 L111.0,533.16 L111.5,533.11 L112.0,533.06 L112.5,533.01 L113.0,532.95 L113.5,532.89 L114.0,532.83 L114.5,532.77 L115.0,532.70 L115.5,532.64 L116.0,532.57 L116.5,532.50 L117.0,532.43 L117.5,532.36 L118.0,532.29 L118.5,532.21 L119.0,532.14 L119.5,532.06 L120.0,531.98 L120.5,531.90 L121.0,531.81 L121.5,531.72 L122.0,531.61 L122.5,531.51 L123.0,531.39 L123.5,531.28 L124.0,531.15 L124.5,531.02 L125.0,530.89 L125.5,530.75 L126.0,530.61 L126.5,530.47 L127.0,530.32 L127.5,530.17 L128.0,530.01 L128.5,529.85 L129.0,529.69 L129.5,529.53 L130.0,529.36 L130.5,529.20 L131.0,529.03 L131.5,528.86 L132.0,528.68 L132.5,528.51 L133.0,528.34 L133.5,528.17 L134.0,527.99 L134.5,527.82 L135.0,527.64 L135.5,527.47 L136.0,527.30 L136.5,527.13 L137.0,526.95 L137.5,526.76 L138.0,526.58 L138.5,526.39 L139.0,526.19 L139.5,525.99 L140.0,525.79 L140.5,525.59 L141.0,525.38 L141.5,525.17 L142.0,524.96 L142.5,524.75 L143.0,524.53 L143.5,524.32 L144.0,524.10 L144.5,523.88 L145.0,523.67 L145.5,523.45 L146.0,523.23 L146.5,523.01 L147.0,522.79 L147.5,522.58 L148.0,522.36 L148.5,522.14 L149.0,521.93 L149.5,521.72 L150.0,521.51 L150.5,521.30 L151.0,521.10 L151.5,520.89 L152.0,520.68 L152.5,520.46 L153.0,520.23 L153.5,520.01 L154.0,519.78 L154.5,519.56 L155.0,519.35 L155.5,519.14 L156.0,518.94 L156.5,518.76 L157.0,518.59 L157.5,518.43 L158.0,518.30 L158.5,518.18 L159.0,518.05 L159.5,517.92 L160.0,517.80 L160.5,517.68 L161.0,517.57 L161.5,517.46 L162.0,517.37 L162.5,517.28 L163.0,517.21 L163.5,517.16 L164.0,517.12 L164.5,517.10 L165.0,517.10 L165.5,517.12 L166.0,517.16 L166.5,517.20 L167.0,517.27 L167.5,517.34 L168.0,517.42 L168.5,517.51 L169.0,517.60 L169.5,517.70 L170.0,517.80 L170.5,517.92 L171.0,518.07 L171.5,518.25 L172.0,518.46 L172.5,518.69 L173.0,518.93 L173.5,519.20 L174.0,519.47 L174.5,519.75 L175.0,520.04 L175.5,520.33 L176.0,520.62 L176.5,520.92 L177.0,521.25 L177.5,521.60 L178.0,521.97 L178.5,522.35 L179.0,522.75 L179.5,523.15 L180.0,523.57 L180.5,523.98 L181.0,524.41 L181.5,524.83 L182.0,525.25 L182.5,525.66 L183.0,526.07 L183.5,526.47 L184.0,526.85 L184.5,527.23 L185.0,527.59 L185.5,527.95 L186.0,528.32 L186.5,528.68 L187.0,529.03 L187.5,529.38 L188.0,529.73 L188.5,530.06 L189.0,530.39 L189.5,530.70 L190.0,531.00 L190.5,531.30 L191.0,531.61 L191.5,531.92 L192.0,532.22 L192.5,532.50 L193.0,532.76 L193.5,532.98 L194.0,533.17 L194.5,533.30 L195.0,533.40 L195.5,533.48 L196.0,533.55 L196.5,533.62 L197.0,533.68 L197.5,533.73 L198.0,533.78 L198.5,533.83 L199.0,533.88 L199.5,533.94 L200.0,534.00 L200.0,534.00" fill="none" stroke="#a09a00" stroke-width="1.1"/><path d="M128.0,534.00 L128.5,533.98 L129.0,533.97 L129.5,533.95 L130.0,533.94 L130.5,533.92 L131.0,533.91 L131.5,533.89 L132.0,533.88 L132.5,533.87 L133.0,533.85 L133.5,533.84 L134.0,533.82 L134.5,533.81 L135.0,533.79 L135.5,533.78 L136.0,533.76 L136.5,533.74 L137.0,533.73 L137.5,533.71 L138.0,533.69 L138.5,533.67 L139.0,533.65 L139.5,533.62 L140.0,533.60 L140.5,533.57 L141.0,533.55 L141.5,533.52 L142.0,533.49 L142.5,533.45 L143.0,533.42 L143.5,533.38 L144.0,533.34 L144.5,533.30 L145.0,533.26 L145.5,533.22 L146.0,533.17 L146.5,533.13 L147.0,533.08 L147.5,533.03 L148.0,532.98 L148.5,532.93 L149.0,532.88 L149.5,532.83 L150.0,532.77 L150.5,532.72 L151.0,532.66 L151.5,532.61 L152.0,532.55 L152.5,532.49 L153.0,532.44 L153.5,532.38 L154.0,532.32 L154.5,532.26 L155.0,532.20 L155.5,532.14 L156.0,532.08 L156.5,532.02 L157.0,531.95 L157.5,531.89 L158.0,531.82 L158.5,531.75 L159.0,531.68 L159.5,531.61 L160.0,531.54 L160.5,531.47 L161.0,531.39 L161.5,531.32 L162.0,531.24 L162.5,531.16 L163.0,531.07 L163.5,530.99 L164.0,530.91 L164.5,530.82 L165.0,530.73 L165.5,530.64 L166.0,530.54 L166.5,530.45 L167.0,530.35 L167.5,530.25 L168.0,530.14 L168.5,530.04 L169.0,529.93 L169.5,529.82 L170.0,529.71 L170.5,529.59 L171.0,529.47 L171.5,529.34 L172.0,529.20 L172.5,529.07 L173.0,528.92 L173.5,528.78 L174.0,528.62 L174.5,528.47 L175.0,528.31 L175.5,528.14 L176.0,527.97 L176.5,527.80 L177.0,527.63 L177.5,527.45 L178.0,527.27 L178.5,527.08 L179.0,526.89 L179.5,526.70 L180.0,526.51 L180.5,526.31 L181.0,526.11 L181.5,525.91 L182.0,525.71 L182.5,525.50 L183.0,525.29 L183.5,525.08 L184.0,524.87 L184.5,524.66 L185.0,524.44 L185.5,524.23 L186.0,524.01 L186.5,523.79 L187.0,523.57 L187.5,523.35 L188.0,523.13 L188.5,522.91 L189.0,522.69 L189.5,522.45 L190.0,522.22 L190.5,521.98 L191.0,521.73 L191.5,521.48 L192.0,521.22 L192.5,520.97 L193.0,520.70 L193.5,520.44 L194.0,520.16 L194.5,519.89 L195.0,519.61 L195.5,519.33 L196.0,519.05 L196.5,518.76 L197.0,518.48 L197.5,518.19 L198.0,517.89 L198.5,517.60 L199.0,517.30 L199.5,517.01 L200.0,516.71 L200.5,516.41 L201.0,516.11 L201.5,515.81 L202.0,515.51 L202.5,515.20 L203.0,514.90 L203.5,514.60 L204.0,514.29 L204.5,513.97 L205.0,513.63 L205.5,513.28 L206.0,512.91 L206.5,512.54 L207.0,512.17 L207.5,511.79 L208.0,511.40 L208.5,511.01 L209.0,510.62 L209.5,510.23 L210.0,509.85 L210.5,509.47 L211.0,509.09 L211.5,508.72 L212.0,508.36 L212.5,508.02 L213.0,507.68 L213.5,507.36 L214.0,507.05 L214.5,506.76 L215.0,506.49 L215.5,506.24 L216.0,506.01 L216.5,505.81 L217.0,505.63 L217.5,505.47 L218.0,505.31 L218.5,505.15 L219.0,505.00 L219.5,504.84 L220.0,504.69 L220.5,504.54 L221.0,504.40 L221.5,504.26 L222.0,504.13 L222.5,504.01 L223.0,503.90 L223.5,503.79 L224.0,503.70 L224.5,503.62 L225.0,503.55 L225.5,503.49 L226.0,503.45 L226.5,503.42 L227.0,503.40 L227.5,503.40 L228.0,503.43 L228.5,503.49 L229.0,503.56 L229.5,503.65 L230.0,503.77 L230.5,503.90 L231.0,504.04 L231.5,504.20 L232.0,504.38 L232.5,504.56 L233.0,504.75 L233.5,504.94 L234.0,505.15 L234.5,505.35 L235.0,505.56 L235.5,505.78 L236.0,506.04 L236.5,506.33 L237.0,506.66 L237.5,507.02 L238.0,507.40 L238.5,507.80 L239.0,508.22 L239.5,508.65 L240.0,509.10 L240.5,509.55 L241.0,510.00 L241.5,510.47 L242.0,510.98 L242.5,511.52 L243.0,512.08 L243.5,512.68 L244.0,513.29 L244.5,513.93 L245.0,514.58 L245.5,515.24 L246.0,515.92 L246.5,516.60 L247.0,517.28 L247.5,517.96 L248.0,518.64 L248.5,519.32 L249.0,519.98 L249.5,520.63 L250.0,521.27 L250.5,521.89 L251.0,522.48 L251.5,523.05 L252.0,523.59 L252.5,524.10 L253.0,524.61 L253.5,525.13 L254.0,525.64 L254.5,526.16 L255.0,526.66 L255.5,527.17 L256.0,527.66 L256.5,528.15 L257.0,528.62 L257.5,529.07 L258.0,529.51 L258.5,529.92 L259.0,530.31 L259.5,530.68 L260.0,531.02 L260.5,531.33 L261.0,531.60 L261.5,531.85 L262.0,532.06 L262.5,532.26 L263.0,532.45 L263.5,532.62 L264.0,532.78 L264.5,532.93 L265.0,533.07 L265.5,533.22 L266.0,533.35 L266.5,533.49 L267.0,533.64 L267.5,533.78 L268.0,533.94 L268.2,534.00" fill="none" stroke="#00c800" stroke-width="1.1"/><path d="M205.0,534.00 L205.5,533.98 L206.0,533.97 L206.5,533.95 L207.0,533.94 L207.5,533.92 L208.0,533.91 L208.5,533.89 L209.0,533.87 L209.5,533.86 L210.0,533.84 L210.5,533.83 L211.0,533.81 L211.5,533.80 L212.0,533.78 L212.5,533.77 L213.0,533.75 L213.5,533.73 L214.0,533.72 L214.5,533.70 L215.0,533.68 L215.5,533.66 L216.0,533.64 L216.5,533.62 L217.0,533.60 L217.5,533.58 L218.0,533.56 L218.5,533.54 L219.0,533.52 L219.5,533.50 L220.0,533.48 L220.5,533.46 L221.0,533.44 L221.5,533.42 L222.0,533.39 L222.5,533.37 L223.0,533.34 L223.5,533.31 L224.0,533.28 L224.5,533.25 L225.0,533.21 L225.5,533.17 L226.0,533.13 L226.5,533.08 L227.0,533.03 L227.5,532.97 L228.0,532.88 L228.5,532.75 L229.0,532.58 L229.5,532.38 L230.0,532.15 L230.5,531.88 L231.0,531.59 L231.5,531.27 L232.0,530.93 L232.5,530.57 L233.0,530.19 L233.5,529.79 L234.0,529.38 L234.5,528.96 L235.0,528.53 L235.5,528.09 L236.0,527.65 L236.5,527.21 L237.0,526.74 L237.5,526.24 L238.0,525.71 L238.5,525.14 L239.0,524.53 L239.5,523.89 L240.0,523.22 L240.5,522.51 L241.0,521.77 L241.5,521.00 L242.0,520.19 L242.5,519.35 L243.0,518.47 L243.5,517.56 L244.0,516.62 L244.5,515.65 L245.0,514.64 L245.5,513.60 L246.0,512.48 L246.5,511.24 L247.0,509.88 L247.5,508.42 L248.0,506.87 L248.5,505.23 L249.0,503.51 L249.5,501.73 L250.0,499.88 L250.5,497.99 L251.0,496.06 L251.5,494.09 L252.0,492.10 L252.5,490.08 L253.0,487.93 L253.5,485.64 L254.0,483.23 L254.5,480.72 L255.0,478.13 L255.5,475.49 L256.0,472.81 L256.5,470.12 L257.0,467.44 L257.5,464.80 L258.0,462.21 L258.5,459.69 L259.0,457.27 L259.5,454.92 L260.0,452.56 L260.5,450.20 L261.0,447.84 L261.5,445.51 L262.0,443.20 L262.5,440.94 L263.0,438.74 L263.5,436.60 L264.0,434.54 L264.5,432.58 L265.0,430.71 L265.5,428.94 L266.0,427.20 L266.5,425.50 L267.0,423.90 L267.5,422.42 L268.0,421.11 L268.5,420.00 L269.0,418.97 L269.5,417.95 L270.0,417.00 L270.5,416.22 L271.0,415.69 L271.5,415.50 L272.0,415.62 L272.5,415.93 L273.0,416.38 L273.5,416.92 L274.0,417.48 L274.5,418.00 L275.0,418.46 L275.5,418.89 L276.0,419.33 L276.5,419.81 L277.0,420.37 L277.5,421.05 L278.0,421.89 L278.5,422.96 L279.0,425.53 L279.5,429.80 L280.0,435.26 L280.5,441.39 L281.0,447.68 L281.5,453.62 L282.0,458.82 L282.5,464.09 L283.0,469.57 L283.5,475.12 L284.0,480.63 L284.5,485.95 L285.0,490.97 L285.5,495.55 L286.0,499.57 L286.5,502.92 L287.0,505.86 L287.5,508.58 L288.0,511.11 L288.5,513.45 L289.0,515.63 L289.5,517.66 L290.0,519.56 L290.5,521.34 L291.0,523.03 L291.5,524.72 L292.0,526.38 L292.5,527.95 L293.0,529.36 L293.5,530.55 L294.0,531.44 L294.5,531.99 L295.0,532.39 L295.5,532.73 L296.0,533.00 L296.5,533.25 L297.0,533.48 L297.5,533.73 L298.0,534.00 L298.0,534.00" fill="none" stroke="#1a6ea8" stroke-width="1.1"/><path d="M205.0,534.00 L205.5,534.00 L206.0,534.00 L206.5,534.00 L207.0,534.00 L207.5,534.00 L208.0,534.00 L208.5,534.00 L209.0,534.00 L209.5,534.00 L210.0,534.00 L210.5,534.00 L211.0,534.00 L211.5,534.00 L212.0,534.00 L212.5,534.00 L213.0,534.00 L213.5,534.00 L214.0,534.00 L214.5,534.00 L215.0,534.00 L215.5,534.00 L216.0,534.00 L216.5,534.00 L217.0,534.00 L217.5,534.00 L218.0,534.00 L218.5,534.00 L219.0,534.00 L219.5,534.00 L220.0,534.00 L220.5,534.00 L221.0,534.00 L221.5,534.00 L222.0,534.00 L222.5,534.00 L223.0,534.00 L223.5,534.00 L224.0,534.00 L224.5,534.00 L225.0,534.00 L225.5,534.00 L226.0,534.00 L226.5,534.00 L227.0,534.00 L227.5,534.00 L228.0,534.00 L228.5,534.00 L229.0,534.00 L229.5,534.00 L230.0,533.99 L230.5,533.96 L231.0,533.91 L231.5,533.85 L232.0,533.77 L232.5,533.67 L233.0,533.57 L233.5,533.45 L234.0,533.31 L234.5,533.17 L235.0,533.02 L235.5,532.87 L236.0,532.70 L236.5,532.53 L237.0,532.36 L237.5,532.19 L238.0,532.01 L238.5,531.84 L239.0,531.65 L239.5,531.46 L240.0,531.24 L240.5,531.01 L241.0,530.76 L241.5,530.50 L242.0,530.22 L242.5,529.93 L243.0,529.62 L243.5,529.30 L244.0,528.96 L244.5,528.61 L245.0,528.25 L245.5,527.87 L246.0,527.48 L246.5,527.07 L247.0,526.66 L247.5,526.23 L248.0,525.78 L248.5,525.33 L249.0,524.86 L249.5,524.39 L250.0,523.90 L250.5,523.38 L251.0,522.82 L251.5,522.22 L252.0,521.57 L252.5,520.88 L253.0,520.16 L253.5,519.40 L254.0,518.61 L254.5,517.79 L255.0,516.94 L255.5,516.06 L256.0,515.15 L256.5,514.23 L257.0,513.28 L257.5,512.31 L258.0,511.32 L258.5,510.32 L259.0,509.30 L259.5,508.27 L260.0,507.21 L260.5,506.11 L261.0,504.96 L261.5,503.78 L262.0,502.55 L262.5,501.27 L263.0,499.93 L263.5,498.53 L264.0,497.08 L264.5,495.55 L265.0,493.96 L265.5,492.29 L266.0,490.54 L266.5,488.63 L267.0,486.52 L267.5,484.24 L268.0,481.81 L268.5,479.26 L269.0,476.60 L269.5,473.85 L270.0,471.05 L270.5,468.20 L271.0,465.25 L271.5,462.12 L272.0,458.84 L272.5,455.44 L273.0,451.95 L273.5,448.38 L274.0,444.77 L274.5,441.05 L275.0,437.19 L275.5,433.23 L276.0,429.20 L276.5,425.14 L277.0,421.08 L277.5,417.02 L278.0,412.93 L278.5,408.76 L279.0,404.46 L279.5,400.00 L280.0,395.36 L280.5,390.57 L281.0,385.66 L281.5,380.63 L282.0,375.50 L282.5,370.30 L283.0,365.04 L283.5,359.73 L284.0,354.40 L284.5,349.05 L285.0,343.72 L285.5,338.41 L286.0,333.14 L286.5,327.92 L287.0,322.70 L287.5,317.48 L288.0,312.24 L288.5,307.00 L289.0,301.74 L289.5,296.48 L290.0,291.20 L290.5,285.92 L291.0,280.62 L291.5,275.32 L292.0,270.00 L292.5,264.68 L293.0,259.37 L293.5,254.05 L294.0,248.73 L294.5,243.40 L295.0,238.06 L295.5,232.71 L296.0,227.33 L296.5,221.93 L297.0,216.50 L297.5,211.04 L298.0,205.54 L298.5,200.00 L299.0,194.35 L299.5,188.57 L300.0,182.72 L300.5,176.87 L301.0,171.09 L301.5,165.45 L302.0,160.00 L302.5,154.60 L303.0,149.14 L303.5,143.80 L304.0,138.72 L304.5,134.07 L305.0,130.00 L305.5,126.32 L306.0,122.81 L306.5,119.65 L307.0,116.99 L307.5,115.00 L308.0,113.41 L308.5,111.89 L309.0,110.50 L309.5,109.30 L310.0,108.34 L310.5,107.69 L311.0,107.41 L311.5,107.63 L312.0,108.45 L312.5,109.73 L313.0,111.30 L313.5,113.00 L314.0,115.13 L314.5,117.98 L315.0,121.33 L315.5,125.00 L316.0,129.21 L316.5,134.14 L317.0,139.50 L317.5,145.00 L318.0,150.59 L318.5,156.52 L319.0,163.00 L319.5,170.24 L320.0,178.18 L320.5,186.57 L321.0,195.27 L321.5,204.47 L322.0,214.09 L322.5,223.95 L323.0,234.07 L323.5,245.46 L324.0,259.57 L324.5,274.67 L325.0,288.00 L325.5,298.58 L326.0,307.87 L326.5,316.70 L327.0,325.92 L327.5,336.39 L328.0,348.24 L328.5,360.48 L329.0,372.00 L329.5,382.84 L330.0,393.16 L330.5,402.00 L331.0,409.34 L331.5,415.90 L332.0,421.87 L332.5,427.46 L333.0,432.87 L333.5,438.30 L334.0,443.94 L334.5,450.00 L335.0,456.57 L335.5,463.48 L336.0,470.50 L336.5,477.41 L337.0,483.99 L337.5,490.00 L338.0,495.69 L338.5,501.17 L339.0,506.07 L339.5,510.00 L340.0,513.08 L340.5,515.73 L341.0,518.03 L341.5,520.05 L342.0,521.88 L342.5,523.62 L343.0,525.24 L343.5,526.67 L344.0,527.87 L344.5,528.80 L345.0,529.54 L345.5,530.24 L346.0,530.87 L346.5,531.45 L347.0,531.96 L347.5,532.40 L348.0,532.78 L348.5,533.08 L349.0,533.30 L349.5,533.46 L350.0,533.59 L350.5,533.70 L351.0,533.80 L351.5,533.89 L352.0,534.00 L352.0,534.00" fill="none" stroke="#9900bb" stroke-width="1.1"/><path d="M200.0,534.00 L200.5,533.98 L201.0,533.96 L201.5,533.94 L202.0,533.92 L202.5,533.90 L203.0,533.89 L203.5,533.87 L204.0,533.85 L204.5,533.83 L205.0,533.81 L205.5,533.80 L206.0,533.78 L206.5,533.76 L207.0,533.74 L207.5,533.73 L208.0,533.71 L208.5,533.69 L209.0,533.67 L209.5,533.66 L210.0,533.64 L210.5,533.62 L211.0,533.60 L211.5,533.59 L212.0,533.57 L212.5,533.55 L213.0,533.53 L213.5,533.51 L214.0,533.50 L214.5,533.48 L215.0,533.46 L215.5,533.44 L216.0,533.42 L216.5,533.40 L217.0,533.38 L217.5,533.36 L218.0,533.34 L218.5,533.32 L219.0,533.30 L219.5,533.27 L220.0,533.25 L220.5,533.23 L221.0,533.21 L221.5,533.18 L222.0,533.16 L222.5,533.13 L223.0,533.11 L223.5,533.08 L224.0,533.06 L224.5,533.03 L225.0,533.00 L225.5,532.97 L226.0,532.94 L226.5,532.91 L227.0,532.87 L227.5,532.84 L228.0,532.80 L228.5,532.77 L229.0,532.73 L229.5,532.69 L230.0,532.64 L230.5,532.60 L231.0,532.56 L231.5,532.51 L232.0,532.46 L232.5,532.42 L233.0,532.37 L233.5,532.32 L234.0,532.27 L234.5,532.22 L235.0,532.16 L235.5,532.11 L236.0,532.06 L236.5,532.00 L237.0,531.95 L237.5,531.89 L238.0,531.84 L238.5,531.78 L239.0,531.72 L239.5,531.67 L240.0,531.61 L240.5,531.55 L241.0,531.49 L241.5,531.43 L242.0,531.37 L242.5,531.31 L243.0,531.25 L243.5,531.19 L244.0,531.13 L244.5,531.07 L245.0,531.01 L245.5,530.95 L246.0,530.89 L246.5,530.83 L247.0,530.77 L247.5,530.71 L248.0,530.65 L248.5,530.60 L249.0,530.54 L249.5,530.48 L250.0,530.42 L250.5,530.36 L251.0,530.31 L251.5,530.25 L252.0,530.20 L252.5,530.14 L253.0,530.09 L253.5,530.03 L254.0,529.98 L254.5,529.93 L255.0,529.88 L255.5,529.83 L256.0,529.78 L256.5,529.73 L257.0,529.69 L257.5,529.64 L258.0,529.59 L258.5,529.55 L259.0,529.51 L259.5,529.47 L260.0,529.43 L260.5,529.39 L261.0,529.35 L261.5,529.31 L262.0,529.28 L262.5,529.24 L263.0,529.20 L263.5,529.17 L264.0,529.14 L264.5,529.10 L265.0,529.07 L265.5,529.04 L266.0,529.00 L266.5,528.97 L267.0,528.94 L267.5,528.91 L268.0,528.88 L268.5,528.85 L269.0,528.81 L269.5,528.78 L270.0,528.75 L270.5,528.72 L271.0,528.69 L271.5,528.66 L272.0,528.62 L272.5,528.59 L273.0,528.56 L273.5,528.52 L274.0,528.49 L274.5,528.45 L275.0,528.42 L275.5,528.38 L276.0,528.34 L276.5,528.30 L277.0,528.26 L277.5,528.22 L278.0,528.18 L278.5,528.14 L279.0,528.09 L279.5,528.05 L280.0,528.00 L280.5,527.95 L281.0,527.90 L281.5,527.85 L282.0,527.79 L282.5,527.74 L283.0,527.68 L283.5,527.62 L284.0,527.56 L284.5,527.50 L285.0,527.43 L285.5,527.37 L286.0,527.30 L286.5,527.23 L287.0,527.16 L287.5,527.09 L288.0,527.02 L288.5,526.95 L289.0,526.87 L289.5,526.80 L290.0,526.72 L290.5,526.65 L291.0,526.57 L291.5,526.49 L292.0,526.42 L292.5,526.34 L293.0,526.26 L293.5,526.18 L294.0,526.10 L294.5,526.03 L295.0,525.95 L295.5,525.87 L296.0,525.79 L296.5,525.71 L297.0,525.63 L297.5,525.56 L298.0,525.48 L298.5,525.40 L299.0,525.33 L299.5,525.25 L300.0,525.18 L300.5,525.10 L301.0,525.03 L301.5,524.96 L302.0,524.88 L302.5,524.81 L303.0,524.74 L303.5,524.67 L304.0,524.60 L304.5,524.53 L305.0,524.45 L305.5,524.37 L306.0,524.30 L306.5,524.22 L307.0,524.14 L307.5,524.06 L308.0,523.98 L308.5,523.90 L309.0,523.82 L309.5,523.74 L310.0,523.65 L310.5,523.57 L311.0,523.49 L311.5,523.41 L312.0,523.33 L312.5,523.25 L313.0,523.17 L313.5,523.09 L314.0,523.01 L314.5,522.93 L315.0,522.85 L315.5,522.77 L316.0,522.69 L316.5,522.62 L317.0,522.54 L317.5,522.47 L318.0,522.40 L318.5,522.33 L319.0,522.26 L319.5,522.19 L320.0,522.12 L320.5,522.06 L321.0,522.00 L321.5,521.94 L322.0,521.88 L322.5,521.82 L323.0,521.77 L323.5,521.72 L324.0,521.67 L324.5,521.62 L325.0,521.58 L325.5,521.54 L326.0,521.50 L326.5,521.46 L327.0,521.43 L327.5,521.40 L328.0,521.37 L328.5,521.34 L329.0,521.32 L329.5,521.29 L330.0,521.26 L330.5,521.24 L331.0,521.21 L331.5,521.19 L332.0,521.16 L332.5,521.14 L333.0,521.12 L333.5,521.10 L334.0,521.08 L334.5,521.06 L335.0,521.05 L335.5,521.03 L336.0,521.02 L336.5,521.01 L337.0,521.01 L337.5,521.00 L338.0,521.00 L338.5,521.00 L339.0,521.01 L339.5,521.02 L340.0,521.03 L340.5,521.04 L341.0,521.06 L341.5,521.08 L342.0,521.10 L342.5,521.12 L343.0,521.14 L343.5,521.17 L344.0,521.19 L344.5,521.22 L345.0,521.25 L345.5,521.27 L346.0,521.30 L346.5,521.33 L347.0,521.35 L347.5,521.38 L348.0,521.40 L348.5,521.43 L349.0,521.46 L349.5,521.48 L350.0,521.51 L350.5,521.54 L351.0,521.56 L351.5,521.59 L352.0,521.62 L352.5,521.65 L353.0,521.68 L353.5,521.71 L354.0,521.74 L354.5,521.77 L355.0,521.80 L355.5,521.84 L356.0,521.87 L356.5,521.90 L357.0,521.93 L357.5,521.97 L358.0,522.00 L358.5,522.04 L359.0,522.07 L359.5,522.11 L360.0,522.14 L360.5,522.18 L361.0,522.21 L361.5,522.25 L362.0,522.29 L362.5,522.32 L363.0,522.36 L363.5,522.40 L364.0,522.44 L364.5,522.47 L365.0,522.51 L365.5,522.55 L366.0,522.59 L366.5,522.63 L367.0,522.67 L367.5,522.71 L368.0,522.75 L368.5,522.79 L369.0,522.83 L369.5,522.87 L370.0,522.91 L370.5,522.95 L371.0,522.99 L371.5,523.03 L372.0,523.07 L372.5,523.11 L373.0,523.16 L373.5,523.20 L374.0,523.24 L374.5,523.28 L375.0,523.32 L375.5,523.36 L376.0,523.41 L376.5,523.45 L377.0,523.49 L377.5,523.53 L378.0,523.57 L378.5,523.62 L379.0,523.66 L379.5,523.70 L380.0,523.74 L380.5,523.78 L381.0,523.83 L381.5,523.87 L382.0,523.91 L382.5,523.96 L383.0,524.00 L383.5,524.05 L384.0,524.09 L384.5,524.14 L385.0,524.18 L385.5,524.23 L386.0,524.27 L386.5,524.32 L387.0,524.37 L387.5,524.41 L388.0,524.46 L388.5,524.51 L389.0,524.55 L389.5,524.60 L390.0,524.65 L390.5,524.70 L391.0,524.75 L391.5,524.79 L392.0,524.84 L392.5,524.89 L393.0,524.94 L393.5,524.99 L394.0,525.04 L394.5,525.09 L395.0,525.14 L395.5,525.19 L396.0,525.24 L396.5,525.29 L397.0,525.34 L397.5,525.39 L398.0,525.45 L398.5,525.50 L399.0,525.55 L399.5,525.60 L400.0,525.65 L400.5,525.70 L401.0,525.76 L401.5,525.81 L402.0,525.86 L402.5,525.91 L403.0,525.97 L403.5,526.02 L404.0,526.07 L404.5,526.12 L405.0,526.18 L405.5,526.23 L406.0,526.28 L406.5,526.34 L407.0,526.39 L407.5,526.45 L408.0,526.50 L408.5,526.55 L409.0,526.61 L409.5,526.66 L410.0,526.71 L410.5,526.77 L411.0,526.82 L411.5,526.88 L412.0,526.93 L412.5,526.98 L413.0,527.04 L413.5,527.09 L414.0,527.15 L414.5,527.20 L415.0,527.26 L415.5,527.31 L416.0,527.37 L416.5,527.42 L417.0,527.47 L417.5,527.53 L418.0,527.58 L418.5,527.64 L419.0,527.69 L419.5,527.75 L420.0,527.80 L420.5,527.85 L421.0,527.91 L421.5,527.96 L422.0,528.02 L422.5,528.07 L423.0,528.13 L423.5,528.19 L424.0,528.24 L424.5,528.30 L425.0,528.35 L425.5,528.41 L426.0,528.47 L426.5,528.52 L427.0,528.58 L427.5,528.64 L428.0,528.69 L428.5,528.75 L429.0,528.81 L429.5,528.87 L430.0,528.92 L430.5,528.98 L431.0,529.04 L431.5,529.10 L432.0,529.16 L432.5,529.22 L433.0,529.27 L433.5,529.33 L434.0,529.39 L434.5,529.45 L435.0,529.51 L435.5,529.57 L436.0,529.63 L436.5,529.69 L437.0,529.74 L437.5,529.80 L438.0,529.86 L438.5,529.92 L439.0,529.98 L439.5,530.04 L440.0,530.10 L440.5,530.16 L441.0,530.22 L441.5,530.28 L442.0,530.34 L442.5,530.40 L443.0,530.46 L443.5,530.52 L444.0,530.58 L444.5,530.64 L445.0,530.70 L445.5,530.76 L446.0,530.82 L446.5,530.88 L447.0,530.94 L447.5,531.00 L448.0,531.06 L448.5,531.11 L449.0,531.17 L449.5,531.23 L450.0,531.29 L450.5,531.35 L451.0,531.41 L451.5,531.47 L452.0,531.53 L452.5,531.59 L453.0,531.65 L453.5,531.71 L454.0,531.77 L454.5,531.82 L455.0,531.88 L455.5,531.94 L456.0,532.00 L456.0,532.00" fill="none" stroke="#1e1e1e" stroke-width="1.1"/><path d="M395.0,534.00 L395.5,533.99 L396.0,533.98 L396.5,533.97 L397.0,533.96 L397.5,533.95 L398.0,533.94 L398.5,533.93 L399.0,533.92 L399.5,533.91 L400.0,533.90 L400.5,533.89 L401.0,533.88 L401.5,533.87 L402.0,533.86 L402.5,533.85 L403.0,533.83 L403.5,533.82 L404.0,533.80 L404.5,533.78 L405.0,533.76 L405.5,533.74 L406.0,533.71 L406.5,533.68 L407.0,533.65 L407.5,533.62 L408.0,533.58 L408.5,533.54 L409.0,533.50 L409.5,533.46 L410.0,533.42 L410.5,533.37 L411.0,533.33 L411.5,533.28 L412.0,533.23 L412.5,533.18 L413.0,533.13 L413.5,533.08 L414.0,533.03 L414.5,532.98 L415.0,532.92 L415.5,532.87 L416.0,532.82 L416.5,532.76 L417.0,532.71 L417.5,532.66 L418.0,532.60 L418.5,532.55 L419.0,532.50 L419.5,532.45 L420.0,532.40 L420.5,532.35 L421.0,532.30 L421.5,532.25 L422.0,532.21 L422.5,532.16 L423.0,532.12 L423.5,532.07 L424.0,532.03 L424.5,531.99 L425.0,531.94 L425.5,531.90 L426.0,531.85 L426.5,531.81 L427.0,531.76 L427.5,531.72 L428.0,531.67 L428.5,531.62 L429.0,531.57 L429.5,531.51 L430.0,531.46 L430.5,531.40 L431.0,531.34 L431.5,531.28 L432.0,531.21 L432.5,531.15 L433.0,531.07 L433.5,531.00 L434.0,530.92 L434.5,530.83 L435.0,530.74 L435.5,530.64 L436.0,530.54 L436.5,530.43 L437.0,530.31 L437.5,530.19 L438.0,530.06 L438.5,529.93 L439.0,529.79 L439.5,529.65 L440.0,529.50 L440.5,529.34 L441.0,529.18 L441.5,529.02 L442.0,528.85 L442.5,528.67 L443.0,528.49 L443.5,528.31 L444.0,528.11 L444.5,527.92 L445.0,527.72 L445.5,527.50 L446.0,527.26 L446.5,527.00 L447.0,526.72 L447.5,526.42 L448.0,526.11 L448.5,525.79 L449.0,525.46 L449.5,525.11 L450.0,524.76 L450.5,524.40 L451.0,524.03 L451.5,523.66 L452.0,523.29 L452.5,522.92 L453.0,522.55 L453.5,522.15 L454.0,521.74 L454.5,521.30 L455.0,520.87 L455.5,520.43 L456.0,520.00 L456.0,520.00" fill="none" stroke="#ff0000" stroke-width="1.1"/><rect x="70" y="534" width="384" height="1" fill="#ff0000"/></g><g clip-path="url(#pc)"><line x1="69" y1="535" x2="455" y2="90" stroke="#ff0000" stroke-width="2.4"/></g><g clip-path="url(#pc)"><path d="M69.00,532.00 L69.25,532.00 L69.50,531.99 L69.75,531.99 L70.00,531.99 L70.25,531.99 L70.50,531.98 L70.75,531.98 L71.00,531.98 L71.25,531.98 L71.50,531.97 L71.75,531.97 L72.00,531.97 L72.25,531.97 L72.50,531.96 L72.75,531.96 L73.00,531.96 L73.25,531.96 L73.50,531.96 L73.75,531.95 L74.00,531.95 L74.25,531.95 L74.50,531.95 L74.75,531.94 L75.00,531.94 L75.25,531.94 L75.50,531.94 L75.75,531.94 L76.00,531.93 L76.25,531.93 L76.50,531.93 L76.75,531.93 L77.00,531.93 L77.25,531.93 L77.50,531.92 L77.75,531.92 L78.00,531.92 L78.25,531.92 L78.50,531.92 L78.75,531.91 L79.00,531.91 L79.25,531.91 L79.50,531.91 L79.75,531.91 L80.00,531.90 L80.25,531.90 L80.50,531.90 L80.75,531.90 L81.00,531.90 L81.25,531.89 L81.50,531.89 L81.75,531.89 L82.00,531.89 L82.25,531.88 L82.50,531.88 L82.75,531.88 L83.00,531.88 L83.25,531.88 L83.50,531.87 L83.75,531.87 L84.00,531.87 L84.25,531.87 L84.50,531.86 L84.75,531.86 L85.00,531.86 L85.25,531.86 L85.50,531.85 L85.75,531.85 L86.00,531.85 L86.25,531.84 L86.50,531.84 L86.75,531.84 L87.00,531.84 L87.25,531.83 L87.50,531.83 L87.75,531.83 L88.00,531.82 L88.25,531.82 L88.50,531.82 L88.75,531.81 L89.00,531.81 L89.25,531.81 L89.50,531.80 L89.75,531.80 L90.00,531.79 L90.25,531.79 L90.50,531.79 L90.75,531.78 L91.00,531.78 L91.25,531.77 L91.50,531.77 L91.75,531.77 L92.00,531.76 L92.25,531.76 L92.50,531.75 L92.75,531.75 L93.00,531.74 L93.25,531.74 L93.50,531.73 L93.75,531.73 L94.00,531.72 L94.25,531.72 L94.50,531.71 L94.75,531.71 L95.00,531.70 L95.25,531.69 L95.50,531.69 L95.75,531.68 L96.00,531.67 L96.25,531.65 L96.50,531.64 L96.75,531.63 L97.00,531.61 L97.25,531.60 L97.50,531.58 L97.75,531.56 L98.00,531.54 L98.25,531.52 L98.50,531.50 L98.75,531.48 L99.00,531.45 L99.25,531.43 L99.50,531.40 L99.75,531.38 L100.00,531.35 L100.25,531.32 L100.50,531.30 L100.75,531.27 L101.00,531.24 L101.25,531.21 L101.50,531.18 L101.75,531.15 L102.00,531.12 L102.25,531.08 L102.50,531.05 L102.75,531.02 L103.00,530.99 L103.25,530.96 L103.50,530.92 L103.75,530.89 L104.00,530.86 L104.25,530.82 L104.50,530.79 L104.75,530.75 L105.00,530.72 L105.25,530.69 L105.50,530.65 L105.75,530.62 L106.00,530.58 L106.25,530.55 L106.50,530.52 L106.75,530.48 L107.00,530.45 L107.25,530.42 L107.50,530.39 L107.75,530.35 L108.00,530.32 L108.25,530.29 L108.50,530.25 L108.75,530.22 L109.00,530.19 L109.25,530.15 L109.50,530.12 L109.75,530.08 L110.00,530.04 L110.25,530.01 L110.50,529.97 L110.75,529.93 L111.00,529.90 L111.25,529.86 L111.50,529.82 L111.75,529.78 L112.00,529.74 L112.25,529.70 L112.50,529.66 L112.75,529.62 L113.00,529.58 L113.25,529.54 L113.50,529.50 L113.75,529.46 L114.00,529.41 L114.25,529.37 L114.50,529.33 L114.75,529.29 L115.00,529.24 L115.25,529.20 L115.50,529.15 L115.75,529.11 L116.00,529.06 L116.25,529.02 L116.50,528.97 L116.75,528.92 L117.00,528.88 L117.25,528.83 L117.50,528.78 L117.75,528.73 L118.00,528.68 L118.25,528.63 L118.50,528.59 L118.75,528.54 L119.00,528.48 L119.25,528.43 L119.50,528.38 L119.75,528.33 L120.00,528.28 L120.25,528.23 L120.50,528.17 L120.75,528.12 L121.00,528.06 L121.25,528.00 L121.50,527.95 L121.75,527.89 L122.00,527.83 L122.25,527.77 L122.50,527.71 L122.75,527.65 L123.00,527.58 L123.25,527.52 L123.50,527.46 L123.75,527.39 L124.00,527.33 L124.25,527.26 L124.50,527.19 L124.75,527.13 L125.00,527.06 L125.25,526.99 L125.50,526.92 L125.75,526.85 L126.00,526.78 L126.25,526.71 L126.50,526.64 L126.75,526.57 L127.00,526.50 L127.25,526.43 L127.50,526.35 L127.75,526.28 L128.00,526.21 L128.25,526.13 L128.50,526.06 L128.75,525.98 L129.00,525.91 L129.25,525.83 L129.50,525.76 L129.75,525.68 L130.00,525.61 L130.25,525.53 L130.50,525.45 L130.75,525.38 L131.00,525.30 L131.25,525.22 L131.50,525.15 L131.75,525.07 L132.00,524.99 L132.25,524.92 L132.50,524.84 L132.75,524.76 L133.00,524.68 L133.25,524.61 L133.50,524.53 L133.75,524.45 L134.00,524.37 L134.25,524.29 L134.50,524.21 L134.75,524.13 L135.00,524.05 L135.25,523.97 L135.50,523.89 L135.75,523.81 L136.00,523.73 L136.25,523.65 L136.50,523.56 L136.75,523.48 L137.00,523.40 L137.25,523.31 L137.50,523.23 L137.75,523.15 L138.00,523.06 L138.25,522.97 L138.50,522.89 L138.75,522.80 L139.00,522.71 L139.25,522.63 L139.50,522.54 L139.75,522.45 L140.00,522.36 L140.25,522.27 L140.50,522.18 L140.75,522.09 L141.00,521.99 L141.25,521.90 L141.50,521.81 L141.75,521.71 L142.00,521.62 L142.25,521.52 L142.50,521.43 L142.75,521.33 L143.00,521.23 L143.25,521.13 L143.50,521.03 L143.75,520.93 L144.00,520.83 L144.25,520.73 L144.50,520.62 L144.75,520.52 L145.00,520.41 L145.25,520.30 L145.50,520.19 L145.75,520.07 L146.00,519.94 L146.25,519.82 L146.50,519.68 L146.75,519.55 L147.00,519.41 L147.25,519.27 L147.50,519.13 L147.75,518.98 L148.00,518.84 L148.25,518.69 L148.50,518.54 L148.75,518.40 L149.00,518.25 L149.25,518.10 L149.50,517.95 L149.75,517.80 L150.00,517.66 L150.25,517.51 L150.50,517.37 L150.75,517.23 L151.00,517.09 L151.25,516.95 L151.50,516.82 L151.75,516.69 L152.00,516.56 L152.25,516.44 L152.50,516.32 L152.75,516.20 L153.00,516.09 L153.25,515.99 L153.50,515.89 L153.75,515.80 L154.00,515.71 L154.25,515.63 L154.50,515.55 L154.75,515.49 L155.00,515.42 L155.25,515.36 L155.50,515.29 L155.75,515.23 L156.00,515.17 L156.25,515.10 L156.50,515.04 L156.75,514.98 L157.00,514.92 L157.25,514.85 L157.50,514.79 L157.75,514.73 L158.00,514.67 L158.25,514.61 L158.50,514.56 L158.75,514.50 L159.00,514.44 L159.25,514.39 L159.50,514.33 L159.75,514.28 L160.00,514.23 L160.25,514.18 L160.50,514.13 L160.75,514.08 L161.00,514.03 L161.25,513.98 L161.50,513.94 L161.75,513.90 L162.00,513.85 L162.25,513.81 L162.50,513.78 L162.75,513.74 L163.00,513.70 L163.25,513.67 L163.50,513.64 L163.75,513.61 L164.00,513.58 L164.25,513.55 L164.50,513.53 L164.75,513.50 L165.00,513.48 L165.25,513.47 L165.50,513.45 L165.75,513.44 L166.00,513.42 L166.25,513.41 L166.50,513.41 L166.75,513.40 L167.00,513.40 L167.25,513.40 L167.50,513.41 L167.75,513.43 L168.00,513.45 L168.25,513.48 L168.50,513.52 L168.75,513.57 L169.00,513.62 L169.25,513.68 L169.50,513.74 L169.75,513.81 L170.00,513.88 L170.25,513.96 L170.50,514.04 L170.75,514.13 L171.00,514.22 L171.25,514.31 L171.50,514.41 L171.75,514.50 L172.00,514.60 L172.25,514.70 L172.50,514.80 L172.75,514.91 L173.00,515.01 L173.25,515.11 L173.50,515.22 L173.75,515.32 L174.00,515.42 L174.25,515.52 L174.50,515.62 L174.75,515.72 L175.00,515.81 L175.25,515.91 L175.50,516.00 L175.75,516.08 L176.00,516.17 L176.25,516.26 L176.50,516.36 L176.75,516.46 L177.00,516.56 L177.25,516.67 L177.50,516.78 L177.75,516.90 L178.00,517.01 L178.25,517.13 L178.50,517.25 L178.75,517.37 L179.00,517.50 L179.25,517.62 L179.50,517.74 L179.75,517.86 L180.00,517.98 L180.25,518.09 L180.50,518.20 L180.75,518.32 L181.00,518.42 L181.25,518.53 L181.50,518.63 L181.75,518.72 L182.00,518.81 L182.25,518.89 L182.50,518.97 L182.75,519.04 L183.00,519.10 L183.25,519.16 L183.50,519.20 L183.75,519.24 L184.00,519.27 L184.25,519.29 L184.50,519.30 L184.75,519.30 L185.00,519.29 L185.25,519.28 L185.50,519.25 L185.75,519.22 L186.00,519.19 L186.25,519.15 L186.50,519.10 L186.75,519.05 L187.00,519.00 L187.25,518.94 L187.50,518.87 L187.75,518.81 L188.00,518.73 L188.25,518.66 L188.50,518.58 L188.75,518.50 L189.00,518.42 L189.25,518.34 L189.50,518.25 L189.75,518.17 L190.00,518.08 L190.25,517.99 L190.50,517.91 L190.75,517.82 L191.00,517.73 L191.25,517.65 L191.50,517.56 L191.75,517.48 L192.00,517.40 L192.25,517.32 L192.50,517.24 L192.75,517.16 L193.00,517.08 L193.25,517.00 L193.50,516.91 L193.75,516.83 L194.00,516.75 L194.25,516.66 L194.50,516.57 L194.75,516.49 L195.00,516.40 L195.25,516.30 L195.50,516.21 L195.75,516.12 L196.00,516.02 L196.25,515.92 L196.50,515.82 L196.75,515.72 L197.00,515.61 L197.25,515.50 L197.50,515.39 L197.75,515.28 L198.00,515.16 L198.25,515.05 L198.50,514.92 L198.75,514.80 L199.00,514.67 L199.25,514.54 L199.50,514.40 L199.75,514.26 L200.00,514.12 L200.25,513.97 L200.50,513.82 L200.75,513.67 L201.00,513.50 L201.25,513.31 L201.50,513.11 L201.75,512.89 L202.00,512.66 L202.25,512.41 L202.50,512.16 L202.75,511.89 L203.00,511.61 L203.25,511.32 L203.50,511.02 L203.75,510.72 L204.00,510.41 L204.25,510.10 L204.50,509.78 L204.75,509.47 L205.00,509.15 L205.25,508.83 L205.50,508.51 L205.75,508.19 L206.00,507.87 L206.25,507.56 L206.50,507.26 L206.75,506.96 L207.00,506.67 L207.25,506.39 L207.50,506.11 L207.75,505.85 L208.00,505.60 L208.25,505.36 L208.50,505.12 L208.75,504.88 L209.00,504.64 L209.25,504.41 L209.50,504.18 L209.75,503.96 L210.00,503.73 L210.25,503.51 L210.50,503.29 L210.75,503.07 L211.00,502.85 L211.25,502.63 L211.50,502.42 L211.75,502.21 L212.00,501.99 L212.25,501.78 L212.50,501.57 L212.75,501.36 L213.00,501.15 L213.25,500.94 L213.50,500.74 L213.75,500.53 L214.00,500.32 L214.25,500.11 L214.50,499.90 L214.75,499.70 L215.00,499.49 L215.25,499.28 L215.50,499.07 L215.75,498.86 L216.00,498.65 L216.25,498.43 L216.50,498.22 L216.75,498.00 L217.00,497.79 L217.25,497.57 L217.50,497.35 L217.75,497.13 L218.00,496.91 L218.25,496.69 L218.50,496.48 L218.75,496.26 L219.00,496.04 L219.25,495.82 L219.50,495.60 L219.75,495.38 L220.00,495.16 L220.25,494.94 L220.50,494.72 L220.75,494.50 L221.00,494.28 L221.25,494.06 L221.50,493.84 L221.75,493.62 L222.00,493.40 L222.25,493.18 L222.50,492.96 L222.75,492.74 L223.00,492.52 L223.25,492.30 L223.50,492.08 L223.75,491.86 L224.00,491.65 L224.25,491.43 L224.50,491.21 L224.75,490.99 L225.00,490.77 L225.25,490.55 L225.50,490.33 L225.75,490.11 L226.00,489.89 L226.25,489.67 L226.50,489.45 L226.75,489.24 L227.00,489.02 L227.25,488.81 L227.50,488.59 L227.75,488.38 L228.00,488.17 L228.25,487.96 L228.50,487.75 L228.75,487.54 L229.00,487.34 L229.25,487.13 L229.50,486.92 L229.75,486.71 L230.00,486.50 L230.25,486.29 L230.50,486.08 L230.75,485.87 L231.00,485.66 L231.25,485.44 L231.50,485.23 L231.75,485.01 L232.00,484.79 L232.25,484.57 L232.50,484.35 L232.75,484.13 L233.00,483.90 L233.25,483.67 L233.50,483.44 L233.75,483.21 L234.00,482.97 L234.25,482.74 L234.50,482.49 L234.75,482.25 L235.00,482.00 L235.25,481.75 L235.50,481.50 L235.75,481.25 L236.00,480.99 L236.25,480.74 L236.50,480.49 L236.75,480.23 L237.00,479.97 L237.25,479.71 L237.50,479.45 L237.75,479.19 L238.00,478.92 L238.25,478.64 L238.50,478.37 L238.75,478.09 L239.00,477.80 L239.25,477.51 L239.50,477.21 L239.75,476.91 L240.00,476.60 L240.25,476.28 L240.50,475.96 L240.75,475.63 L241.00,475.29 L241.25,474.94 L241.50,474.59 L241.75,474.22 L242.00,473.85 L242.25,473.47 L242.50,473.08 L242.75,472.67 L243.00,472.26 L243.25,471.83 L243.50,471.39 L243.75,470.94 L244.00,470.47 L244.25,469.99 L244.50,469.48 L244.75,468.96 L245.00,468.42 L245.25,467.86 L245.50,467.28 L245.75,466.68 L246.00,466.05 L246.25,465.40 L246.50,464.72 L246.75,463.97 L247.00,463.15 L247.25,462.27 L247.50,461.32 L247.75,460.33 L248.00,459.30 L248.25,458.23 L248.50,457.14 L248.75,456.04 L249.00,454.93 L249.25,453.81 L249.50,452.71 L249.75,451.62 L250.00,450.53 L250.25,449.44 L250.50,448.32 L250.75,447.19 L251.00,446.05 L251.25,444.89 L251.50,443.72 L251.75,442.55 L252.00,441.36 L252.25,440.17 L252.50,438.97 L252.75,437.77 L253.00,436.56 L253.25,435.36 L253.50,434.15 L253.75,432.95 L254.00,431.74 L254.25,430.53 L254.50,429.30 L254.75,428.06 L255.00,426.81 L255.25,425.53 L255.50,424.23 L255.75,422.91 L256.00,421.55 L256.25,420.16 L256.50,418.74 L256.75,417.28 L257.00,415.81 L257.25,414.31 L257.50,412.79 L257.75,411.26 L258.00,409.73 L258.25,408.19 L258.50,406.62 L258.75,405.02 L259.00,403.39 L259.25,401.76 L259.50,400.15 L259.75,398.55 L260.00,397.00 L260.25,395.50 L260.50,394.05 L260.75,392.62 L261.00,391.21 L261.25,389.79 L261.50,388.34 L261.75,386.85 L262.00,385.30 L262.25,383.68 L262.50,382.01 L262.75,380.29 L263.00,378.54 L263.25,376.76 L263.50,374.96 L263.75,373.16 L264.00,371.36 L264.25,369.57 L264.50,367.80 L264.75,366.03 L265.00,364.24 L265.25,362.43 L265.50,360.61 L265.75,358.81 L266.00,357.01 L266.25,355.25 L266.50,353.52 L266.75,351.83 L267.00,350.20 L267.25,348.61 L267.50,347.03 L267.75,345.47 L268.00,343.92 L268.25,342.41 L268.50,340.92 L268.75,339.45 L269.00,338.03 L269.25,336.63 L269.50,335.28 L269.75,333.97 L270.00,332.70 L270.25,331.47 L270.50,330.26 L270.75,329.07 L271.00,327.90 L271.25,326.75 L271.50,325.63 L271.75,324.53 L272.00,323.45 L272.25,322.40 L272.50,321.37 L272.75,320.36 L273.00,319.38 L273.25,318.42 L273.50,317.49 L273.75,316.58 L274.00,315.69 L274.25,314.81 L274.50,313.94 L274.75,313.09 L275.00,312.24 L275.25,311.41 L275.50,310.59 L275.75,309.78 L276.00,308.99 L276.25,308.22 L276.50,307.46 L276.75,306.71 L277.00,305.99 L277.25,305.29 L277.50,304.60 L277.75,303.94 L278.00,303.30 L278.25,302.68 L278.50,302.08 L278.75,301.51 L279.00,300.96 L279.25,300.44 L279.50,299.94 L279.75,299.46 L280.00,299.00 L280.25,298.55 L280.50,298.11 L280.75,297.69 L281.00,297.28 L281.25,296.87 L281.50,296.47 L281.75,296.06 L282.00,295.66 L282.25,295.26 L282.50,294.86 L282.75,294.45 L283.00,294.03 L283.25,293.59 L283.50,293.15 L283.75,292.69 L284.00,292.23 L284.25,291.78 L284.50,291.33 L284.75,290.90 L285.00,290.46 L285.25,290.02 L285.50,289.57 L285.75,289.11 L286.00,288.64 L286.25,288.15 L286.50,287.63 L286.75,287.09 L287.00,286.52 L287.25,285.91 L287.50,285.27 L287.75,284.58 L288.00,283.86 L288.25,283.08 L288.50,282.24 L288.75,281.34 L289.00,280.37 L289.25,279.31 L289.50,278.17 L289.75,276.92 L290.00,275.57 L290.25,274.04 L290.50,272.07 L290.75,269.74 L291.00,267.14 L291.25,264.37 L291.50,261.53 L291.75,258.71 L292.00,256.02 L292.25,253.50 L292.50,251.00 L292.75,248.50 L293.00,246.00 L293.25,243.50 L293.50,241.00 L293.75,238.50 L294.00,236.01 L294.25,233.52 L294.50,231.03 L294.75,228.52 L295.00,225.99 L295.25,223.44 L295.50,220.87 L295.75,218.32 L296.00,215.78 L296.25,213.24 L296.50,210.67 L296.75,208.05 L297.00,205.36 L297.25,202.58 L297.50,199.69 L297.75,196.63 L298.00,193.25 L298.25,189.67 L298.50,186.03 L298.75,182.47 L299.00,179.12 L299.25,176.13 L299.50,173.44 L299.75,170.94 L300.00,168.57 L300.25,166.25 L300.50,163.92 L300.75,161.51 L301.00,158.96 L301.25,156.29 L301.50,153.56 L301.75,150.81 L302.00,148.11 L302.25,145.50 L302.50,143.01 L302.75,140.58 L303.00,138.20 L303.25,135.86 L303.50,133.55 L303.75,131.27 L304.00,129.00 L304.25,126.75 L304.50,124.48 L304.75,122.08 L305.00,119.60 L305.25,117.11 L305.50,114.70 L305.75,112.45 L306.00,110.46 L306.25,108.80 L306.50,107.53 L306.75,106.47 L307.00,105.54 L307.25,104.71 L307.50,103.95 L307.75,103.23 L308.00,102.54 L308.25,101.84 L308.50,101.10 L308.75,100.28 L309.00,99.42 L309.25,98.53 L309.50,97.64 L309.75,96.80 L310.00,96.02 L310.25,95.35 L310.50,94.80 L310.75,94.41 L311.00,94.22 L311.25,94.24 L311.50,94.50 L311.75,94.96 L312.00,95.58 L312.25,96.32 L312.50,97.16 L312.75,98.06 L313.00,98.99 L313.25,99.90 L313.50,100.76 L313.75,101.55 L314.00,102.24 L314.25,102.87 L314.50,103.50 L314.75,104.18 L315.00,104.94 L315.25,105.85 L315.50,106.95 L315.75,108.32 L316.00,110.92 L316.25,114.60 L316.50,118.55 L316.75,122.04 L317.00,125.21 L317.25,128.32 L317.50,131.34 L317.75,134.24 L318.00,136.86 L318.25,139.11 L318.50,141.29 L318.75,143.73 L319.00,146.76 L319.25,151.21 L319.50,157.67 L319.75,163.05 L320.00,167.76 L320.25,172.22 L320.50,176.70 L320.75,181.23 L321.00,185.71 L321.25,190.17 L321.50,194.63 L321.75,199.10 L322.00,203.52 L322.25,207.79 L322.50,212.08 L322.75,216.56 L323.00,221.42 L323.25,226.73 L323.50,232.48 L323.75,239.06 L324.00,247.28 L324.25,258.07 L324.50,267.23 L324.75,275.84 L325.00,283.55 L325.25,289.97 L325.50,295.42 L325.75,300.27 L326.00,304.66 L326.25,308.72 L326.50,312.59 L326.75,316.40 L327.00,320.28 L327.25,324.37 L327.50,328.81 L327.75,333.73 L328.00,339.12 L328.25,344.88 L328.50,350.88 L328.75,357.02 L329.00,363.18 L329.25,369.25 L329.50,375.19 L329.75,381.46 L330.00,387.84 L330.25,393.94 L330.50,399.34 L330.75,403.68 L331.00,407.42 L331.25,410.90 L331.50,414.17 L331.75,417.23 L332.00,420.12 L332.25,422.85 L332.50,425.44 L332.75,427.92 L333.00,430.32 L333.25,432.64 L333.50,434.93 L333.75,437.19 L334.00,439.45 L334.25,441.74 L334.50,444.07 L334.75,446.48 L335.00,448.97 L335.25,451.58 L335.50,454.34 L335.75,457.21 L336.00,460.17 L336.25,463.20 L336.50,466.28 L336.75,469.37 L337.00,472.46 L337.25,475.51 L337.50,478.51 L337.75,481.43 L338.00,484.24 L338.25,486.93 L338.50,489.45 L338.75,491.80 L339.00,493.94 L339.25,495.85 L339.50,497.51 L339.75,498.89 L340.00,499.96 L340.25,500.76 L340.50,501.48 L340.75,502.15 L341.00,502.78 L341.25,503.37 L341.50,503.91 L341.75,504.42 L342.00,504.90 L342.25,505.36 L342.50,505.78 L342.75,506.19 L343.00,506.57 L343.25,506.94 L343.50,507.30 L343.75,507.65 L344.00,508.00 L344.25,508.34 L344.50,508.68 L344.75,509.03 L345.00,509.39 L345.25,509.76 L345.50,510.14 L345.75,510.54 L346.00,510.95 L346.25,511.37 L346.50,511.80 L346.75,512.23 L347.00,512.67 L347.25,513.11 L347.50,513.55 L347.75,513.99 L348.00,514.43 L348.25,514.87 L348.50,515.30 L348.75,515.72 L349.00,516.14 L349.25,516.54 L349.50,516.94 L349.75,517.32 L350.00,517.69 L350.25,518.04 L350.50,518.37 L350.75,518.69 L351.00,518.98 L351.25,519.25 L351.50,519.50 L351.75,519.72 L352.00,519.91 L352.25,520.08 L352.50,520.21 L352.75,520.32 L353.00,520.41 L353.25,520.50 L353.50,520.59 L353.75,520.67 L354.00,520.75 L354.25,520.83 L354.50,520.91 L354.75,520.98 L355.00,521.05 L355.25,521.12 L355.50,521.19 L355.75,521.25 L356.00,521.31 L356.25,521.37 L356.50,521.43 L356.75,521.49 L357.00,521.55 L357.25,521.60 L357.50,521.65 L357.75,521.70 L358.00,521.75 L358.25,521.80 L358.50,521.84 L358.75,521.89 L359.00,521.93 L359.25,521.97 L359.50,522.01 L359.75,522.05 L360.00,522.09 L360.25,522.13 L360.50,522.17 L360.75,522.20 L361.00,522.24 L361.25,522.27 L361.50,522.31 L361.75,522.34 L362.00,522.38 L362.25,522.41 L362.50,522.44 L362.75,522.47 L363.00,522.51 L363.25,522.54 L363.50,522.57 L363.75,522.61 L364.00,522.64 L364.25,522.67 L364.50,522.70 L364.75,522.74 L365.00,522.77 L365.25,522.81 L365.50,522.84 L365.75,522.88 L366.00,522.91 L366.25,522.95 L366.50,522.98 L366.75,523.02 L367.00,523.05 L367.25,523.09 L367.50,523.12 L367.75,523.16 L368.00,523.19 L368.25,523.23 L368.50,523.26 L368.75,523.30 L369.00,523.33 L369.25,523.37 L369.50,523.40 L369.75,523.43 L370.00,523.47 L370.25,523.50 L370.50,523.54 L370.75,523.57 L371.00,523.61 L371.25,523.64 L371.50,523.67 L371.75,523.71 L372.00,523.74 L372.25,523.78 L372.50,523.81 L372.75,523.84 L373.00,523.87 L373.25,523.91 L373.50,523.94 L373.75,523.97 L374.00,524.00 L374.25,524.04 L374.50,524.07 L374.75,524.10 L375.00,524.13 L375.25,524.16 L375.50,524.19 L375.75,524.22 L376.00,524.25 L376.25,524.28 L376.50,524.31 L376.75,524.34 L377.00,524.37 L377.25,524.40 L377.50,524.43 L377.75,524.46 L378.00,524.49 L378.25,524.51 L378.50,524.54 L378.75,524.57 L379.00,524.59 L379.25,524.62 L379.50,524.65 L379.75,524.67 L380.00,524.70 L380.25,524.72 L380.50,524.75 L380.75,524.77 L381.00,524.79 L381.25,524.82 L381.50,524.84 L381.75,524.86 L382.00,524.88 L382.25,524.90 L382.50,524.93 L382.75,524.95 L383.00,524.97 L383.25,524.99 L383.50,525.00 L383.75,525.02 L384.00,525.04 L384.25,525.06 L384.50,525.07 L384.75,525.09 L385.00,525.11 L385.25,525.12 L385.50,525.14 L385.75,525.15 L386.00,525.16 L386.25,525.18 L386.50,525.19 L386.75,525.20 L387.00,525.21 L387.25,525.22 L387.50,525.23 L387.75,525.24 L388.00,525.25 L388.25,525.26 L388.50,525.27 L388.75,525.28 L389.00,525.28 L389.25,525.29 L389.50,525.29 L389.75,525.30 L390.00,525.30 L390.25,525.30 L390.50,525.31 L390.75,525.31 L391.00,525.31 L391.25,525.32 L391.50,525.32 L391.75,525.32 L392.00,525.32 L392.25,525.33 L392.50,525.33 L392.75,525.33 L393.00,525.34 L393.25,525.34 L393.50,525.34 L393.75,525.35 L394.00,525.35 L394.25,525.35 L394.50,525.35 L394.75,525.36 L395.00,525.36 L395.25,525.36 L395.50,525.36 L395.75,525.37 L396.00,525.37 L396.25,525.37 L396.50,525.38 L396.75,525.38 L397.00,525.38 L397.25,525.38 L397.50,525.39 L397.75,525.39 L398.00,525.39 L398.25,525.39 L398.50,525.40 L398.75,525.40 L399.00,525.40 L399.25,525.40 L399.50,525.40 L399.75,525.41 L400.00,525.41 L400.25,525.41 L400.50,525.41 L400.75,525.42 L401.00,525.42 L401.25,525.42 L401.50,525.42 L401.75,525.42 L402.00,525.43 L402.25,525.43 L402.50,525.43 L402.75,525.43 L403.00,525.43 L403.25,525.44 L403.50,525.44 L403.75,525.44 L404.00,525.44 L404.25,525.44 L404.50,525.44 L404.75,525.45 L405.00,525.45 L405.25,525.45 L405.50,525.45 L405.75,525.45 L406.00,525.45 L406.25,525.46 L406.50,525.46 L406.75,525.46 L407.00,525.46 L407.25,525.46 L407.50,525.46 L407.75,525.47 L408.00,525.47 L408.25,525.47 L408.50,525.47 L408.75,525.47 L409.00,525.47 L409.25,525.47 L409.50,525.47 L409.75,525.48 L410.00,525.48 L410.25,525.48 L410.50,525.48 L410.75,525.48 L411.00,525.48 L411.25,525.48 L411.50,525.48 L411.75,525.48 L412.00,525.49 L412.25,525.49 L412.50,525.49 L412.75,525.49 L413.00,525.49 L413.25,525.49 L413.50,525.49 L413.75,525.49 L414.00,525.49 L414.25,525.49 L414.50,525.49 L414.75,525.49 L415.00,525.49 L415.25,525.49 L415.50,525.50 L415.75,525.50 L416.00,525.50 L416.25,525.50 L416.50,525.50 L416.75,525.50 L417.00,525.50 L417.25,525.50 L417.50,525.50 L417.75,525.50 L418.00,525.50 L418.25,525.50 L418.50,525.50 L418.75,525.50 L419.00,525.50 L419.25,525.50 L419.50,525.50 L419.75,525.50 L420.00,525.50 L420.25,525.50 L420.50,525.50 L420.75,525.49 L421.00,525.49 L421.25,525.48 L421.50,525.48 L421.75,525.47 L422.00,525.46 L422.25,525.45 L422.50,525.44 L422.75,525.43 L423.00,525.42 L423.25,525.40 L423.50,525.39 L423.75,525.37 L424.00,525.35 L424.25,525.33 L424.50,525.32 L424.75,525.29 L425.00,525.27 L425.25,525.25 L425.50,525.23 L425.75,525.21 L426.00,525.18 L426.25,525.16 L426.50,525.13 L426.75,525.10 L427.00,525.08 L427.25,525.05 L427.50,525.02 L427.75,524.99 L428.00,524.96 L428.25,524.93 L428.50,524.89 L428.75,524.86 L429.00,524.83 L429.25,524.79 L429.50,524.76 L429.75,524.72 L430.00,524.69 L430.25,524.65 L430.50,524.62 L430.75,524.58 L431.00,524.54 L431.25,524.50 L431.50,524.46 L431.75,524.43 L432.00,524.39 L432.25,524.35 L432.50,524.31 L432.75,524.26 L433.00,524.22 L433.25,524.18 L433.50,524.14 L433.75,524.10 L434.00,524.06 L434.25,524.01 L434.50,523.97 L434.75,523.93 L435.00,523.88 L435.25,523.84 L435.50,523.80 L435.75,523.75 L436.00,523.71 L436.25,523.67 L436.50,523.62 L436.75,523.58 L437.00,523.53 L437.25,523.49 L437.50,523.44 L437.75,523.40 L438.00,523.35 L438.25,523.31 L438.50,523.27 L438.75,523.22 L439.00,523.18 L439.25,523.13 L439.50,523.09 L439.75,523.04 L440.00,523.00 L440.25,522.96 L440.50,522.91 L440.75,522.86 L441.00,522.81 L441.25,522.76 L441.50,522.71 L441.75,522.65 L442.00,522.60 L442.25,522.54 L442.50,522.48 L442.75,522.43 L443.00,522.37 L443.25,522.30 L443.50,522.24 L443.75,522.18 L444.00,522.11 L444.25,522.05 L444.50,521.98 L444.75,521.91 L445.00,521.84 L445.25,521.77 L445.50,521.70 L445.75,521.63 L446.00,521.56 L446.25,521.49 L446.50,521.41 L446.75,521.34 L447.00,521.27 L447.25,521.19 L447.50,521.11 L447.75,521.04 L448.00,520.96 L448.25,520.88 L448.50,520.81 L448.75,520.73 L449.00,520.65 L449.25,520.57 L449.50,520.49 L449.75,520.42 L450.00,520.34 L450.25,520.26 L450.50,520.18 L450.75,520.10 L451.00,520.02 L451.25,519.94 L451.50,519.86 L451.75,519.78 L452.00,519.70 L452.25,519.63 L452.50,519.55 L452.75,519.47 L453.00,519.39 L453.25,519.31 L453.50,519.24 L453.75,519.16 L454.00,519.09 L454.25,519.01 L454.50,518.94 L454.75,518.86 L455.00,518.79 L455.25,518.71 L455.50,518.64 L455.75,518.57 L456.00,518.50" fill="none" stroke="#0000ff" stroke-width="2.9" stroke-linejoin="round"/><path d="M66.2,531.8h7M69.8,528.3v7M69.2,532.3h7M72.8,528.8v7M72.2,531.8h7M75.8,528.3v7M75.2,531.7h7M78.8,528.2v7M78.2,531.2h7M81.8,527.7v7M81.2,531.7h7M84.8,528.2v7M84.2,532.6h7M87.8,529.1v7M87.2,532.1h7M90.8,528.6v7M90.2,532.5h7M93.8,529.0v7M93.2,531.8h7M96.8,528.3v7M96.2,531.7h7M99.8,528.2v7M99.2,531.2h7M102.8,527.7v7M102.2,529.5h7M105.8,526.0v7M105.2,530.8h7M108.8,527.3v7M108.2,530.1h7M111.8,526.6v7M111.2,529.6h7M114.8,526.1v7M114.2,527.5h7M117.8,524.0v7M117.2,526.9h7M120.8,523.4v7M120.2,526.2h7M123.8,522.7v7M123.2,526.0h7M126.8,522.5v7M125.2,526.1h9M129.8,521.6v9M128.2,524.7h9M132.8,520.2v9M131.2,524.5h9M135.8,520.0v9M134.2,522.0h9M138.8,517.5v9M137.2,522.1h9M141.8,517.6v9M140.2,521.0h9M144.8,516.5v9M143.2,518.1h9M147.8,513.6v9M146.2,519.5h9M150.8,515.0v9M149.2,516.5h9M153.8,512.0v9M152.2,516.5h9M156.8,512.0v9M155.2,513.5h9M159.8,509.0v9M158.2,512.8h9M162.8,508.3v9M161.2,513.0h9M165.8,508.5v9M164.2,513.4h9M168.8,508.9v9M167.2,515.3h9M171.8,510.8v9M170.2,516.0h9M174.8,511.5v9M173.2,516.3h9M177.8,511.8v9M176.2,517.1h9M180.8,512.6v9M179.2,518.6h9M183.8,514.1v9M182.2,520.6h9M186.8,516.1v9M185.2,517.1h9M189.8,512.6v9M188.2,517.5h9M192.8,513.0v9M191.2,516.7h9M195.8,512.2v9M194.2,512.9h9M198.8,508.4v9M197.2,513.0h9M201.8,508.5v9M200.2,511.2h9M204.8,506.7v9M203.2,503.2h9M207.8,498.7v9M206.2,502.6h9M210.8,498.1v9M209.2,500.4h9M213.8,495.9v9M212.2,496.9h9M216.8,492.4v9M215.2,496.0h9M219.8,491.5v9M218.2,492.7h9M222.8,488.2v9M221.2,488.2h9M225.8,483.7v9M224.2,488.6h9M228.8,484.1v9M227.2,485.9h9M231.8,481.4v9M230.2,483.5h9M234.8,479.0v9M233.2,481.1h9M237.8,476.6v9M236.2,476.1h9M240.8,471.6v9M239.2,471.1h9M243.8,466.6v9M242.2,462.3h9M246.8,457.8v9M245.2,452.4h9M249.8,447.9v9M248.2,437.0h9M252.8,432.5v9M251.2,422.3h9M255.8,417.8v9M254.2,403.4h9M258.8,398.9v9M257.2,385.6h9M261.8,381.1v9M260.2,365.3h9M264.8,360.8v9M263.2,347.1h9M267.8,342.6v9M266.2,326.4h9M270.8,321.9v9M269.2,314.7h9M273.8,310.2v9M272.2,307.0h9M276.8,302.5v9M275.2,301.3h9M279.8,296.8v9M278.2,295.2h9M282.8,290.7v9M281.2,286.6h9M285.8,282.1v9M284.2,278.1h9M288.8,273.6v9M287.2,259.2h9M291.8,254.7v9M290.2,227.6h9M294.8,223.1v9M293.2,195.2h9M297.8,190.7v9M296.2,162.8h9M300.8,158.3v9M299.2,132.7h9M303.8,128.2v9M302.2,106.7h9M306.8,102.2v9M305.2,97.1h9M309.8,92.6v9M308.2,98.6h9M312.8,94.1v9M311.2,110.4h9M315.8,105.9v9M314.2,144.5h9M318.8,140.0v9M317.2,199.8h9M321.8,195.3v9M320.2,276.5h9M324.8,272.0v9M323.2,331.7h9M327.8,327.2v9M326.2,405.3h9M330.8,400.8v9M329.2,438.4h9M333.8,433.9v9M332.2,470.1h9M336.8,465.6v9M335.2,496.3h9M339.8,491.8v9M338.2,505.4h9M342.8,500.9v9M341.2,511.6h9M345.8,507.1v9M344.2,513.4h9M348.8,508.9v9M347.2,519.5h9M351.8,515.0v9M350.2,522.3h9M354.8,517.8v9M353.2,520.0h9M357.8,515.5v9M356.2,524.3h9M360.8,519.8v9M359.2,523.3h9M363.8,518.8v9M362.2,522.8h9M366.8,518.3v9M365.2,523.9h9M369.8,519.4v9M368.2,524.7h9M372.8,520.2v9M371.2,524.4h9M375.8,519.9v9M374.2,526.1h9M378.8,521.6v9M377.2,524.0h9M381.8,519.5v9M380.2,524.6h9M384.8,520.1v9M383.2,526.6h9M387.8,522.1v9M386.2,525.3h9M390.8,520.8v9M389.2,524.2h9M393.8,519.7v9M392.2,526.6h9M396.8,522.1v9M395.2,527.3h9M399.8,522.8v9M398.2,524.9h9M402.8,520.4v9M401.2,523.7h9M405.8,519.2v9M404.2,525.3h9M408.8,520.8v9M407.2,525.3h9M411.8,520.8v9M410.2,525.1h9M414.8,520.6v9M413.2,527.3h9M417.8,522.8v9M416.2,524.2h9M420.8,519.7v9M419.2,527.0h9M423.8,522.5v9M422.2,523.5h9M426.8,519.0v9M425.2,523.7h9M429.8,519.2v9M428.2,525.1h9M432.8,520.6v9M431.2,525.2h9M435.8,520.7v9M434.2,524.3h9M438.8,519.8v9M437.2,523.1h9M441.8,518.6v9M440.2,522.1h9M444.8,517.6v9M443.2,521.2h9M447.8,516.7v9M446.2,520.8h9M450.8,516.3v9M449.2,518.9h9M453.8,514.4v9" stroke="#0000ff" stroke-width="1.4" fill="none"/><rect x="70" y="534" width="384" height="1" fill="#ff0000"/></g><g shape-rendering="crispEdges"><rect x="68" y="90" width="388" height="2" fill="#000"/><rect x="68" y="535" width="388" height="1" fill="#000"/><rect x="68" y="90" width="2" height="446" fill="#000066"/><rect x="454" y="90" width="2" height="446" fill="#000066"/><rect x="64" y="534" width="6" height="2" fill="#000"/><rect x="64" y="401" width="6" height="2" fill="#000"/><rect x="64" y="268" width="6" height="2" fill="#000"/><rect x="64" y="136" width="6" height="2" fill="#000"/><rect x="66" y="202" width="4" height="2" fill="#000"/><rect x="66" y="335" width="4" height="2" fill="#000"/><rect x="66" y="468" width="4" height="2" fill="#000"/><rect x="144" y="532" width="2" height="5" fill="#000"/><rect x="294" y="532" width="2" height="5" fill="#000"/><rect x="444" y="532" width="2" height="5" fill="#000"/><rect x="69" y="535" width="2" height="5" fill="#000"/><rect x="219" y="535" width="2" height="5" fill="#000"/><rect x="369" y="535" width="2" height="5" fill="#000"/><rect x="450" y="216" width="10" height="2" fill="#000"/><rect x="450" y="389" width="10" height="2" fill="#000"/><rect x="452" y="130" width="6" height="2" fill="#000"/><rect x="452" y="303" width="6" height="2" fill="#000"/><rect x="452" y="475" width="6" height="2" fill="#000"/></g></svg><div style="position:absolute;left:26px;top:80px;white-space:nowrap;font-family:'Liberation Sans',sans-serif;font-size:12px;color:#000;line-height:13px;">x10</div><div style="position:absolute;left:48px;top:74px;white-space:nowrap;font-family:'Liberation Sans',sans-serif;font-size:10px;color:#000;line-height:11px;">6</div><div style="position:absolute;left:0px;top:131px;width:65px;text-align:right;white-space:nowrap;font-family:'Liberation Sans',sans-serif;font-size:12px;color:#000;line-height:14px;">1.5</div><div style="position:absolute;left:0px;top:263px;width:65px;text-align:right;white-space:nowrap;font-family:'Liberation Sans',sans-serif;font-size:12px;color:#000;line-height:14px;">1</div><div style="position:absolute;left:0px;top:396px;width:65px;text-align:right;white-space:nowrap;font-family:'Liberation Sans',sans-serif;font-size:12px;color:#000;line-height:14px;">0.5</div><div style="position:absolute;left:0px;top:529px;width:65px;text-align:right;white-space:nowrap;font-family:'Liberation Sans',sans-serif;font-size:12px;color:#000;line-height:14px;">0</div><div style="position:absolute;left:49px;top:535px;width:42px;text-align:center;white-space:nowrap;font-family:'Liberation Sans',sans-serif;font-size:12px;color:#000;line-height:14px;letter-spacing:-0.9px;">0</div><div style="position:absolute;left:199px;top:535px;width:42px;text-align:center;white-space:nowrap;font-family:'Liberation Sans',sans-serif;font-size:12px;color:#000;line-height:14px;letter-spacing:-0.9px;">100</div><div style="position:absolute;left:349px;top:535px;width:42px;text-align:center;white-space:nowrap;font-family:'Liberation Sans',sans-serif;font-size:12px;color:#000;line-height:14px;letter-spacing:-0.9px;">200</div><div style="position:absolute;left:224px;top:546px;white-space:nowrap;font-family:'Liberation Sans',sans-serif;font-weight:bold;font-size:15px;color:#000;line-height:17px;letter-spacing:0px;">Time (sec)</div><div style="position:absolute;left:461px;top:211px;white-space:nowrap;font-family:'Liberation Sans',sans-serif;font-size:12px;color:#ff0000;line-height:14px;">500</div><div style="position:absolute;left:461px;top:384px;white-space:nowrap;font-family:'Liberation Sans',sans-serif;font-size:12px;color:#ff0000;line-height:14px;">400</div><div style="position:absolute;left:-22px;top:302px;width:120px;height:18px;transform:rotate(90deg);transform-origin:50% 50%;text-align:center;white-space:nowrap;font-family:'Liberation Sans',sans-serif;font-weight:bold;font-size:15px;line-height:18px;color:#000">TL Intensity</div><div style="position:absolute;left:429px;top:303px;width:120px;height:18px;transform:rotate(90deg);transform-origin:50% 50%;text-align:center;white-space:nowrap;font-family:'Liberation Sans',sans-serif;font-weight:bold;font-size:15px;line-height:18px;color:#000">Temperature (K)</div><div style="position:absolute;left:514px;top:54px;width:350px;height:514px;background:#fcfefc;"></div><div style="position:absolute;left:514px;top:55px;width:350px;height:513px;overflow:hidden"><div style="position:absolute;left:14px;top:1px;white-space:nowrap;font-family:'Liberation Sans',sans-serif;font-size:13px;line-height:16px;color:#8c0c8c;font-weight:bold;-webkit-text-stroke:0.25px #8c0c8c;"><span style="display:inline-block;transform:scaleX(1.1);transform-origin:left 50%">Material (Trap Information)</span></div><div style="position:absolute;left:6px;top:16px;width:24px;text-align:center;white-space:nowrap;font-family:'Liberation Sans',sans-serif;font-size:13px;line-height:16px;color:#000;font-weight:bold;-webkit-text-stroke:0.25px #000;"><span style="display:inline-block;transform:scaleX(1.06);transform-origin:center 50%">#</span></div><div style="position:absolute;left:32px;top:16px;width:133px;text-align:center;white-space:nowrap;font-family:'Liberation Sans',sans-serif;font-size:13px;line-height:16px;color:#000;font-weight:bold;-webkit-text-stroke:0.25px #000;"><span style="display:inline-block;transform:scaleX(1.06);transform-origin:center 50%">Type</span></div><div style="position:absolute;left:166px;top:16px;width:24px;text-align:center;white-space:nowrap;font-family:'Liberation Sans',sans-serif;font-size:13px;line-height:16px;color:#000;font-weight:bold;-webkit-text-stroke:0.25px #000;"><span style="display:inline-block;transform:scaleX(1.06);transform-origin:center 50%">E</span></div><div style="position:absolute;left:191px;top:16px;width:23px;text-align:center;white-space:nowrap;font-family:'Liberation Sans',sans-serif;font-size:13px;line-height:16px;color:#000;font-weight:bold;-webkit-text-stroke:0.25px #000;"><span style="display:inline-block;transform:scaleX(1.06);transform-origin:center 50%">s</span></div><div style="position:absolute;left:215px;top:16px;width:23px;text-align:center;white-space:nowrap;font-family:'Liberation Sans',sans-serif;font-size:13px;line-height:16px;color:#000;font-weight:bold;-webkit-text-stroke:0.25px #000;"><span style="display:inline-block;transform:scaleX(1.06);transform-origin:center 50%">R</span></div><div style="position:absolute;left:239px;top:16px;width:24px;text-align:center;white-space:nowrap;font-family:'Liberation Sans',sans-serif;font-size:13px;line-height:16px;color:#000;font-weight:bold;-webkit-text-stroke:0.25px #000;"><span style="display:inline-block;transform:scaleX(1.06);transform-origin:center 50%">N</span></div><div style="position:absolute;left:264px;top:16px;width:23px;text-align:center;white-space:nowrap;font-family:'Liberation Sans',sans-serif;font-size:13px;line-height:16px;color:#000;font-weight:bold;-webkit-text-stroke:0.25px #000;"><span style="display:inline-block;transform:scaleX(1.06);transform-origin:center 50%">A</span></div><div style="position:absolute;left:288px;top:16px;width:24px;text-align:center;white-space:nowrap;font-family:'Liberation Sans',sans-serif;font-size:13px;line-height:16px;color:#000;font-weight:bold;-webkit-text-stroke:0.25px #000;"><span style="display:inline-block;transform:scaleX(1.06);transform-origin:center 50%">mo</span></div><div style="position:absolute;left:313px;top:16px;width:23px;text-align:center;white-space:nowrap;font-family:'Liberation Sans',sans-serif;font-size:13px;line-height:16px;color:#000;font-weight:bold;-webkit-text-stroke:0.25px #000;"><span style="display:inline-block;transform:scaleX(1.06);transform-origin:center 50%">nc</span></div><div style="position:absolute;left:6px;top:31px;width:24px;text-align:center;white-space:nowrap;font-family:'Liberation Sans',sans-serif;font-size:13px;line-height:16px;color:#000;font-weight:bold;-webkit-text-stroke:0.25px #000;">1</div><div style="position:absolute;left:32px;top:31px;width:133px;text-align:center;white-space:nowrap;font-family:'Liberation Sans',sans-serif;font-size:13px;line-height:16px;color:#a08c00;font-weight:bold;-webkit-text-stroke:0.25px #a08c00;"><span style="display:inline-block;transform:scaleX(1.05);transform-origin:center 50%">Mixed order K.</span></div><div style="position:absolute;left:166px;top:31px;width:24px;height:14px;background:#ff0000;"></div><div style="position:absolute;left:166px;top:31px;width:24px;text-align:center;white-space:nowrap;font-family:'Liberation Sans',sans-serif;font-size:13px;line-height:16px;color:#fff;font-weight:bold;-webkit-text-stroke:0.25px #fff;">1</div><div style="position:absolute;left:191px;top:31px;width:23px;height:14px;background:#ff0000;"></div><div style="position:absolute;left:191px;top:31px;width:23px;text-align:center;white-space:nowrap;font-family:'Liberation Sans',sans-serif;font-size:13px;line-height:16px;color:#fff;font-weight:bold;-webkit-text-stroke:0.25px #fff;">8</div><div style="position:absolute;left:215px;top:31px;width:23px;height:14px;background:#ff0000;"></div><div style="position:absolute;left:215px;top:31px;width:23px;text-align:center;white-space:nowrap;font-family:'Liberation Sans',sans-serif;font-size:13px;line-height:16px;color:#fff;font-weight:bold;-webkit-text-stroke:0.25px #fff;">9</div><div style="position:absolute;left:6px;top:45px;width:330px;height:1px;background:#8a8a8a;"></div><div style="position:absolute;left:6px;top:46px;width:24px;text-align:center;white-space:nowrap;font-family:'Liberation Sans',sans-serif;font-size:13px;line-height:16px;color:#000;font-weight:bold;-webkit-text-stroke:0.25px #000;">2</div><div style="position:absolute;left:32px;top:46px;width:133px;text-align:center;white-space:nowrap;font-family:'Liberation Sans',sans-serif;font-size:13px;line-height:16px;color:#00c800;font-weight:bold;-webkit-text-stroke:0.25px #00c800;"><span style="display:inline-block;transform:scaleX(1.05);transform-origin:center 50%">Mixed order K.</span></div><div style="position:absolute;left:166px;top:46px;width:24px;height:14px;background:#ff0000;"></div><div style="position:absolute;left:166px;top:46px;width:24px;text-align:center;white-space:nowrap;font-family:'Liberation Sans',sans-serif;font-size:13px;line-height:16px;color:#fff;font-weight:bold;-webkit-text-stroke:0.25px #fff;">2</div><div style="position:absolute;left:191px;top:46px;width:23px;height:14px;background:#ff0000;"></div><div style="position:absolute;left:191px;top:46px;width:23px;text-align:center;white-space:nowrap;font-family:'Liberation Sans',sans-serif;font-size:13px;line-height:16px;color:#fff;font-weight:bold;-webkit-text-stroke:0.25px #fff;">10</div><div style="position:absolute;left:215px;top:46px;width:23px;height:14px;background:#ff0000;"></div><div style="position:absolute;left:215px;top:46px;width:23px;text-align:center;white-space:nowrap;font-family:'Liberation Sans',sans-serif;font-size:13px;line-height:16px;color:#fff;font-weight:bold;-webkit-text-stroke:0.25px #fff;">11</div><div style="position:absolute;left:6px;top:60px;width:330px;height:1px;background:#8a8a8a;"></div><div style="position:absolute;left:6px;top:61px;width:24px;text-align:center;white-space:nowrap;font-family:'Liberation Sans',sans-serif;font-size:13px;line-height:16px;color:#000;font-weight:bold;-webkit-text-stroke:0.25px #000;">3</div><div style="position:absolute;left:32px;top:61px;width:133px;text-align:center;white-space:nowrap;font-family:'Liberation Sans',sans-serif;font-size:13px;line-height:16px;color:#1466aa;font-weight:bold;-webkit-text-stroke:0.25px #1466aa;"><span style="display:inline-block;transform:scaleX(1.05);transform-origin:center 50%">Mixed order K.</span></div><div style="position:absolute;left:166px;top:61px;width:24px;height:14px;background:#ff0000;"></div><div style="position:absolute;left:166px;top:61px;width:24px;text-align:center;white-space:nowrap;font-family:'Liberation Sans',sans-serif;font-size:13px;line-height:16px;color:#fff;font-weight:bold;-webkit-text-stroke:0.25px #fff;">3</div><div style="position:absolute;left:191px;top:61px;width:23px;height:14px;background:#ff0000;"></div><div style="position:absolute;left:191px;top:61px;width:23px;text-align:center;white-space:nowrap;font-family:'Liberation Sans',sans-serif;font-size:13px;line-height:16px;color:#fff;font-weight:bold;-webkit-text-stroke:0.25px #fff;">12</div><div style="position:absolute;left:215px;top:61px;width:23px;height:14px;background:#ff0000;"></div><div style="position:absolute;left:215px;top:61px;width:23px;text-align:center;white-space:nowrap;font-family:'Liberation Sans',sans-serif;font-size:13px;line-height:16px;color:#fff;font-weight:bold;-webkit-text-stroke:0.25px #fff;">13</div><div style="position:absolute;left:6px;top:75px;width:330px;height:1px;background:#8a8a8a;"></div><div style="position:absolute;left:6px;top:76px;width:24px;text-align:center;white-space:nowrap;font-family:'Liberation Sans',sans-serif;font-size:13px;line-height:16px;color:#000;font-weight:bold;-webkit-text-stroke:0.25px #000;">4</div><div style="position:absolute;left:32px;top:76px;width:133px;text-align:center;white-space:nowrap;font-family:'Liberation Sans',sans-serif;font-size:13px;line-height:16px;color:#9900bb;font-weight:bold;-webkit-text-stroke:0.25px #9900bb;"><span style="display:inline-block;transform:scaleX(1.05);transform-origin:center 50%">Mixed order K.</span></div><div style="position:absolute;left:166px;top:76px;width:24px;height:14px;background:#ff0000;"></div><div style="position:absolute;left:166px;top:76px;width:24px;text-align:center;white-space:nowrap;font-family:'Liberation Sans',sans-serif;font-size:13px;line-height:16px;color:#fff;font-weight:bold;-webkit-text-stroke:0.25px #fff;">4</div><div style="position:absolute;left:191px;top:76px;width:23px;height:14px;background:#ff0000;"></div><div style="position:absolute;left:191px;top:76px;width:23px;text-align:center;white-space:nowrap;font-family:'Liberation Sans',sans-serif;font-size:13px;line-height:16px;color:#fff;font-weight:bold;-webkit-text-stroke:0.25px #fff;">14</div><div style="position:absolute;left:215px;top:76px;width:23px;height:14px;background:#ff0000;"></div><div style="position:absolute;left:215px;top:76px;width:23px;text-align:center;white-space:nowrap;font-family:'Liberation Sans',sans-serif;font-size:13px;line-height:16px;color:#fff;font-weight:bold;-webkit-text-stroke:0.25px #fff;">15</div><div style="position:absolute;left:6px;top:90px;width:330px;height:1px;background:#8a8a8a;"></div><div style="position:absolute;left:6px;top:91px;width:24px;text-align:center;white-space:nowrap;font-family:'Liberation Sans',sans-serif;font-size:13px;line-height:16px;color:#000;font-weight:bold;-webkit-text-stroke:0.25px #000;">5</div><div style="position:absolute;left:32px;top:91px;width:133px;text-align:center;white-space:nowrap;font-family:'Liberation Sans',sans-serif;font-size:13px;line-height:16px;color:#000;font-weight:bold;-webkit-text-stroke:0.25px #000;"><span style="display:inline-block;transform:scaleX(1.05);transform-origin:center 50%">Mixed order K.</span></div><div style="position:absolute;left:166px;top:91px;width:24px;height:14px;background:#ff0000;"></div><div style="position:absolute;left:166px;top:91px;width:24px;text-align:center;white-space:nowrap;font-family:'Liberation Sans',sans-serif;font-size:13px;line-height:16px;color:#fff;font-weight:bold;-webkit-text-stroke:0.25px #fff;">5</div><div style="position:absolute;left:191px;top:91px;width:23px;height:14px;background:#ff0000;"></div><div style="position:absolute;left:191px;top:91px;width:23px;text-align:center;white-space:nowrap;font-family:'Liberation Sans',sans-serif;font-size:13px;line-height:16px;color:#fff;font-weight:bold;-webkit-text-stroke:0.25px #fff;">16</div><div style="position:absolute;left:215px;top:91px;width:23px;height:14px;background:#ff0000;"></div><div style="position:absolute;left:215px;top:91px;width:23px;text-align:center;white-space:nowrap;font-family:'Liberation Sans',sans-serif;font-size:13px;line-height:16px;color:#fff;font-weight:bold;-webkit-text-stroke:0.25px #fff;">17</div><div style="position:absolute;left:30px;top:15px;width:2px;height:91px;background:#0000ff;"></div><div style="position:absolute;left:165px;top:15px;width:1px;height:91px;background:#8a8a8a;"></div><div style="position:absolute;left:190px;top:15px;width:1px;height:91px;background:#8a8a8a;"></div><div style="position:absolute;left:214px;top:15px;width:1px;height:91px;background:#8a8a8a;"></div><div style="position:absolute;left:238px;top:15px;width:1px;height:91px;background:#8a8a8a;"></div><div style="position:absolute;left:263px;top:15px;width:1px;height:91px;background:#8a8a8a;"></div><div style="position:absolute;left:287px;top:15px;width:1px;height:91px;background:#8a8a8a;"></div><div style="position:absolute;left:312px;top:15px;width:1px;height:91px;background:#8a8a8a;"></div><div style="position:absolute;left:6px;top:29px;width:330px;height:2px;background:#0000ff;"></div><div style="position:absolute;left:283px;top:1px;white-space:nowrap;font-family:'Liberation Sans',sans-serif;font-size:13px;line-height:16px;color:#0000ff;font-weight:bold;-webkit-text-stroke:0.25px #0000ff;text-decoration:underline;">Add Trap</div><div style="position:absolute;left:14px;top:116px;white-space:nowrap;font-family:'Liberation Sans',sans-serif;font-size:13px;line-height:16px;color:#8c0c8c;font-weight:bold;-webkit-text-stroke:0.25px #8c0c8c;"><span style="display:inline-block;transform:scaleX(1.1);transform-origin:left 50%">Exposure (n0)</span></div><div style="position:absolute;left:6px;top:131px;width:44px;text-align:center;white-space:nowrap;font-family:'Liberation Sans',sans-serif;font-size:13px;line-height:16px;color:#000;font-weight:bold;-webkit-text-stroke:0.25px #000;"><span style="display:inline-block;transform:scaleX(1.06);transform-origin:center 50%">what</span></div><div style="position:absolute;left:51px;top:131px;width:24px;text-align:center;white-space:nowrap;font-family:'Liberation Sans',sans-serif;font-size:13px;line-height:16px;color:#000;font-weight:bold;-webkit-text-stroke:0.25px #000;"><span style="display:inline-block;transform:scaleX(1.06);transform-origin:center 50%">It</span></div><div style="position:absolute;left:76px;top:131px;width:86px;text-align:center;white-space:nowrap;font-family:'Liberation Sans',sans-serif;font-size:13px;line-height:16px;color:#000;font-weight:bold;-webkit-text-stroke:0.25px #000;"><span style="display:inline-block;transform:scaleX(1.06);transform-origin:center 50%">min</span></div><div style="position:absolute;left:163px;top:131px;width:86px;text-align:center;white-space:nowrap;font-family:'Liberation Sans',sans-serif;font-size:13px;line-height:16px;color:#000;font-weight:bold;-webkit-text-stroke:0.25px #000;"><span style="display:inline-block;transform:scaleX(1.06);transform-origin:center 50%">value</span></div><div style="position:absolute;left:250px;top:131px;width:86px;text-align:center;white-space:nowrap;font-family:'Liberation Sans',sans-serif;font-size:13px;line-height:16px;color:#000;font-weight:bold;-webkit-text-stroke:0.25px #000;"><span style="display:inline-block;transform:scaleX(1.06);transform-origin:center 50%">max</span></div><div style="position:absolute;left:6px;top:146px;width:44px;text-align:center;white-space:nowrap;font-family:'Liberation Sans',sans-serif;font-size:13px;line-height:16px;color:#000;font-weight:bold;-webkit-text-stroke:0.25px #000;"><span style="display:inline-block;transform:scaleX(1.06);transform-origin:center 50%">E1-#1</span></div><div style="position:absolute;left:51px;top:146px;width:24px;height:14px;background:#ff0000;"></div><div style="position:absolute;left:51px;top:146px;width:24px;text-align:center;white-space:nowrap;font-family:'Liberation Sans',sans-serif;font-size:13px;line-height:16px;color:#fff;font-weight:bold;-webkit-text-stroke:0.25px #fff;">18</div><div style="position:absolute;left:76px;top:145px;width:86px;text-align:center;white-space:nowrap;font-family:'Liberation Sans',sans-serif;font-size:11px;line-height:14px;color:#000;-webkit-text-stroke:0.15px #000;">1.000000E+005</div><div style="position:absolute;left:163px;top:145px;width:86px;text-align:center;white-space:nowrap;font-family:'Liberation Sans',sans-serif;font-size:11px;line-height:14px;color:#000;-webkit-text-stroke:0.15px #000;">1.882273E+006</div><div style="position:absolute;left:250px;top:145px;width:86px;text-align:center;white-space:nowrap;font-family:'Liberation Sans',sans-serif;font-size:11px;line-height:14px;color:#000;-webkit-text-stroke:0.15px #000;">1.762600E+007</div><div style="position:absolute;left:6px;top:160px;width:330px;height:1px;background:#8a8a8a;"></div><div style="position:absolute;left:6px;top:161px;width:44px;text-align:center;white-space:nowrap;font-family:'Liberation Sans',sans-serif;font-size:13px;line-height:16px;color:#000;font-weight:bold;-webkit-text-stroke:0.25px #000;"><span style="display:inline-block;transform:scaleX(1.06);transform-origin:center 50%">E1-#2</span></div><div style="position:absolute;left:51px;top:161px;width:24px;height:14px;background:#ff0000;"></div><div style="position:absolute;left:51px;top:161px;width:24px;text-align:center;white-space:nowrap;font-family:'Liberation Sans',sans-serif;font-size:13px;line-height:16px;color:#fff;font-weight:bold;-webkit-text-stroke:0.25px #fff;">19</div><div style="position:absolute;left:76px;top:160px;width:86px;text-align:center;white-space:nowrap;font-family:'Liberation Sans',sans-serif;font-size:11px;line-height:14px;color:#000;-webkit-text-stroke:0.15px #000;">1.000000E+005</div><div style="position:absolute;left:163px;top:160px;width:86px;text-align:center;white-space:nowrap;font-family:'Liberation Sans',sans-serif;font-size:11px;line-height:14px;color:#000;-webkit-text-stroke:0.15px #000;">4.199895E+006</div><div style="position:absolute;left:250px;top:160px;width:86px;text-align:center;white-space:nowrap;font-family:'Liberation Sans',sans-serif;font-size:11px;line-height:14px;color:#000;-webkit-text-stroke:0.15px #000;">1.990220E+007</div><div style="position:absolute;left:6px;top:175px;width:330px;height:1px;background:#8a8a8a;"></div><div style="position:absolute;left:6px;top:176px;width:44px;text-align:center;white-space:nowrap;font-family:'Liberation Sans',sans-serif;font-size:13px;line-height:16px;color:#000;font-weight:bold;-webkit-text-stroke:0.25px #000;"><span style="display:inline-block;transform:scaleX(1.06);transform-origin:center 50%">E1-#3</span></div><div style="position:absolute;left:51px;top:176px;width:24px;height:14px;background:#ff0000;"></div><div style="position:absolute;left:51px;top:176px;width:24px;text-align:center;white-space:nowrap;font-family:'Liberation Sans',sans-serif;font-size:13px;line-height:16px;color:#fff;font-weight:bold;-webkit-text-stroke:0.25px #fff;">20</div><div style="position:absolute;left:76px;top:175px;width:86px;text-align:center;white-space:nowrap;font-family:'Liberation Sans',sans-serif;font-size:11px;line-height:14px;color:#000;-webkit-text-stroke:0.15px #000;">1.000000E+005</div><div style="position:absolute;left:163px;top:175px;width:86px;text-align:center;white-space:nowrap;font-family:'Liberation Sans',sans-serif;font-size:11px;line-height:14px;color:#000;-webkit-text-stroke:0.15px #000;">9.891071E+006</div><div style="position:absolute;left:250px;top:175px;width:86px;text-align:center;white-space:nowrap;font-family:'Liberation Sans',sans-serif;font-size:11px;line-height:14px;color:#000;-webkit-text-stroke:0.15px #000;">1.000000E+013</div><div style="position:absolute;left:6px;top:190px;width:330px;height:1px;background:#8a8a8a;"></div><div style="position:absolute;left:6px;top:191px;width:44px;text-align:center;white-space:nowrap;font-family:'Liberation Sans',sans-serif;font-size:13px;line-height:16px;color:#000;font-weight:bold;-webkit-text-stroke:0.25px #000;"><span style="display:inline-block;transform:scaleX(1.06);transform-origin:center 50%">E1-#4</span></div><div style="position:absolute;left:51px;top:191px;width:24px;height:14px;background:#ff0000;"></div><div style="position:absolute;left:51px;top:191px;width:24px;text-align:center;white-space:nowrap;font-family:'Liberation Sans',sans-serif;font-size:13px;line-height:16px;color:#fff;font-weight:bold;-webkit-text-stroke:0.25px #fff;">21</div><div style="position:absolute;left:76px;top:190px;width:86px;text-align:center;white-space:nowrap;font-family:'Liberation Sans',sans-serif;font-size:11px;line-height:14px;color:#000;-webkit-text-stroke:0.15px #000;">1.000000E+005</div><div style="position:absolute;left:163px;top:190px;width:86px;text-align:center;white-space:nowrap;font-family:'Liberation Sans',sans-serif;font-size:11px;line-height:14px;color:#000;-webkit-text-stroke:0.15px #000;">4.598860E+007</div><div style="position:absolute;left:250px;top:190px;width:86px;text-align:center;white-space:nowrap;font-family:'Liberation Sans',sans-serif;font-size:11px;line-height:14px;color:#000;-webkit-text-stroke:0.15px #000;">1.000000E+013</div><div style="position:absolute;left:6px;top:205px;width:330px;height:1px;background:#8a8a8a;"></div><div style="position:absolute;left:6px;top:206px;width:44px;text-align:center;white-space:nowrap;font-family:'Liberation Sans',sans-serif;font-size:13px;line-height:16px;color:#000;font-weight:bold;-webkit-text-stroke:0.25px #000;"><span style="display:inline-block;transform:scaleX(1.06);transform-origin:center 50%">E1-#5</span></div><div style="position:absolute;left:51px;top:206px;width:24px;height:14px;background:#ff0000;"></div><div style="position:absolute;left:51px;top:206px;width:24px;text-align:center;white-space:nowrap;font-family:'Liberation Sans',sans-serif;font-size:13px;line-height:16px;color:#fff;font-weight:bold;-webkit-text-stroke:0.25px #fff;">22</div><div style="position:absolute;left:76px;top:205px;width:86px;text-align:center;white-space:nowrap;font-family:'Liberation Sans',sans-serif;font-size:11px;line-height:14px;color:#000;-webkit-text-stroke:0.15px #000;">1.000000E+005</div><div style="position:absolute;left:163px;top:205px;width:86px;text-align:center;white-space:nowrap;font-family:'Liberation Sans',sans-serif;font-size:11px;line-height:14px;color:#000;-webkit-text-stroke:0.15px #000;">4.454516E+006</div><div style="position:absolute;left:250px;top:205px;width:86px;text-align:center;white-space:nowrap;font-family:'Liberation Sans',sans-serif;font-size:11px;line-height:14px;color:#000;-webkit-text-stroke:0.15px #000;">1.084338E+007</div><div style="position:absolute;left:50px;top:130px;width:1px;height:91px;background:#8a8a8a;"></div><div style="position:absolute;left:75px;top:130px;width:1px;height:91px;background:#8a8a8a;"></div><div style="position:absolute;left:162px;top:130px;width:1px;height:91px;background:#8a8a8a;"></div><div style="position:absolute;left:249px;top:130px;width:1px;height:91px;background:#8a8a8a;"></div><div style="position:absolute;left:6px;top:144px;width:330px;height:2px;background:#0000ff;"></div><div style="position:absolute;left:14px;top:231px;white-space:nowrap;font-family:'Liberation Sans',sans-serif;font-size:13px;line-height:16px;color:#8c0c8c;font-weight:bold;-webkit-text-stroke:0.25px #8c0c8c;"><span style="display:inline-block;transform:scaleX(1.1);transform-origin:left 50%">Instrument (Noise, Acceptance, Back Radiation)</span></div><div style="position:absolute;left:6px;top:246px;width:44px;text-align:center;white-space:nowrap;font-family:'Liberation Sans',sans-serif;font-size:13px;line-height:16px;color:#000;font-weight:bold;-webkit-text-stroke:0.25px #000;"><span style="display:inline-block;transform:scaleX(1.06);transform-origin:center 50%">what</span></div><div style="position:absolute;left:51px;top:246px;width:24px;text-align:center;white-space:nowrap;font-family:'Liberation Sans',sans-serif;font-size:13px;line-height:16px;color:#000;font-weight:bold;-webkit-text-stroke:0.25px #000;"><span style="display:inline-block;transform:scaleX(1.06);transform-origin:center 50%">It</span></div><div style="position:absolute;left:76px;top:246px;width:86px;text-align:center;white-space:nowrap;font-family:'Liberation Sans',sans-serif;font-size:13px;line-height:16px;color:#000;font-weight:bold;-webkit-text-stroke:0.25px #000;"><span style="display:inline-block;transform:scaleX(1.06);transform-origin:center 50%">min</span></div><div style="position:absolute;left:163px;top:246px;width:86px;text-align:center;white-space:nowrap;font-family:'Liberation Sans',sans-serif;font-size:13px;line-height:16px;color:#000;font-weight:bold;-webkit-text-stroke:0.25px #000;"><span style="display:inline-block;transform:scaleX(1.06);transform-origin:center 50%">value</span></div><div style="position:absolute;left:250px;top:246px;width:86px;text-align:center;white-space:nowrap;font-family:'Liberation Sans',sans-serif;font-size:13px;line-height:16px;color:#000;font-weight:bold;-webkit-text-stroke:0.25px #000;"><span style="display:inline-block;transform:scaleX(1.06);transform-origin:center 50%">max</span></div><div style="position:absolute;left:6px;top:261px;width:44px;text-align:center;white-space:nowrap;font-family:'Liberation Sans',sans-serif;font-size:13px;line-height:16px;color:#000;font-weight:bold;-webkit-text-stroke:0.25px #000;letter-spacing:0.2px;">Noi.</div><div style="position:absolute;left:51px;top:261px;width:24px;height:14px;background:#ff0000;"></div><div style="position:absolute;left:51px;top:261px;width:24px;text-align:center;white-space:nowrap;font-family:'Liberation Sans',sans-serif;font-size:13px;line-height:16px;color:#fff;font-weight:bold;-webkit-text-stroke:0.25px #fff;">6</div><div style="position:absolute;left:76px;top:260px;width:86px;text-align:center;white-space:nowrap;font-family:'Liberation Sans',sans-serif;font-size:11px;line-height:14px;color:#000;-webkit-text-stroke:0.15px #000;">-5.000000E+001</div><div style="position:absolute;left:163px;top:260px;width:86px;text-align:center;white-space:nowrap;font-family:'Liberation Sans',sans-serif;font-size:11px;line-height:14px;color:#000;-webkit-text-stroke:0.15px #000;">1.336829E+003</div><div style="position:absolute;left:250px;top:260px;width:86px;text-align:center;white-space:nowrap;font-family:'Liberation Sans',sans-serif;font-size:11px;line-height:14px;color:#000;-webkit-text-stroke:0.15px #000;">1.599190E+003</div><div style="position:absolute;left:6px;top:275px;width:330px;height:1px;background:#8a8a8a;"></div><div style="position:absolute;left:6px;top:276px;width:44px;text-align:center;white-space:nowrap;font-family:'Liberation Sans',sans-serif;font-size:13px;line-height:16px;color:#000;font-weight:bold;-webkit-text-stroke:0.25px #000;letter-spacing:0.2px;">Acc.</div><div style="position:absolute;left:51px;top:276px;width:24px;height:14px;background:#008000;"></div><div style="position:absolute;left:51px;top:276px;width:24px;text-align:center;white-space:nowrap;font-family:'Liberation Sans',sans-serif;font-size:13px;line-height:16px;color:#fff;font-weight:bold;-webkit-text-stroke:0.25px #fff;">Fix</div><div style="position:absolute;left:76px;top:275px;width:86px;text-align:center;white-space:nowrap;font-family:'Liberation Sans',sans-serif;font-size:11px;line-height:14px;color:#000;-webkit-text-stroke:0.15px #000;">1.000000E-003</div><div style="position:absolute;left:163px;top:275px;width:86px;text-align:center;white-space:nowrap;font-family:'Liberation Sans',sans-serif;font-size:11px;line-height:14px;color:#000;-webkit-text-stroke:0.15px #000;">1.000000E+000</div><div style="position:absolute;left:250px;top:275px;width:86px;text-align:center;white-space:nowrap;font-family:'Liberation Sans',sans-serif;font-size:11px;line-height:14px;color:#000;-webkit-text-stroke:0.15px #000;">1.000000E+003</div><div style="position:absolute;left:6px;top:290px;width:330px;height:1px;background:#8a8a8a;"></div><div style="position:absolute;left:6px;top:291px;width:44px;text-align:center;white-space:nowrap;font-family:'Liberation Sans',sans-serif;font-size:13px;line-height:16px;color:#000;font-weight:bold;-webkit-text-stroke:0.25px #000;letter-spacing:0.2px;">Bk R</div><div style="position:absolute;left:51px;top:291px;width:24px;height:14px;background:#ff0000;"></div><div style="position:absolute;left:51px;top:291px;width:24px;text-align:center;white-space:nowrap;font-family:'Liberation Sans',sans-serif;font-size:13px;line-height:16px;color:#fff;font-weight:bold;-webkit-text-stroke:0.25px #fff;">7</div><div style="position:absolute;left:76px;top:290px;width:86px;text-align:center;white-space:nowrap;font-family:'Liberation Sans',sans-serif;font-size:11px;line-height:14px;color:#000;-webkit-text-stroke:0.15px #000;">1.000000E-007</div><div style="position:absolute;left:163px;top:290px;width:86px;text-align:center;white-space:nowrap;font-family:'Liberation Sans',sans-serif;font-size:11px;line-height:14px;color:#000;-webkit-text-stroke:0.15px #000;">3.332945E-003</div><div style="position:absolute;left:250px;top:290px;width:86px;text-align:center;white-space:nowrap;font-family:'Liberation Sans',sans-serif;font-size:11px;line-height:14px;color:#000;-webkit-text-stroke:0.15px #000;">1.000000E+003</div><div style="position:absolute;left:50px;top:245px;width:1px;height:61px;background:#8a8a8a;"></div><div style="position:absolute;left:75px;top:245px;width:1px;height:61px;background:#8a8a8a;"></div><div style="position:absolute;left:162px;top:245px;width:1px;height:61px;background:#8a8a8a;"></div><div style="position:absolute;left:249px;top:245px;width:1px;height:61px;background:#8a8a8a;"></div><div style="position:absolute;left:6px;top:259px;width:330px;height:2px;background:#0000ff;"></div><div style="position:absolute;left:14px;top:316px;white-space:nowrap;font-family:'Liberation Sans',sans-serif;font-size:13px;line-height:16px;color:#8c0c8c;font-weight:bold;-webkit-text-stroke:0.25px #8c0c8c;"><span style="display:inline-block;transform:scaleX(1.1);transform-origin:left 50%">Unknown Parameter List</span></div><div style="position:absolute;left:134px;top:346px;width:100px;height:179px;background:#f0f0fa;"></div><div style="position:absolute;left:6px;top:331px;width:24px;text-align:center;white-space:nowrap;font-family:'Liberation Sans',sans-serif;font-size:13px;line-height:16px;color:#000;font-weight:bold;-webkit-text-stroke:0.25px #000;"><span style="display:inline-block;transform:scaleX(1.06);transform-origin:center 50%">#</span></div><div style="position:absolute;left:32px;top:331px;width:101px;text-align:center;white-space:nowrap;font-family:'Liberation Sans',sans-serif;font-size:13px;line-height:16px;color:#000;font-weight:bold;-webkit-text-stroke:0.25px #000;"><span style="display:inline-block;transform:scaleX(1.06);transform-origin:center 50%">min</span></div><div style="position:absolute;left:134px;top:331px;width:100px;text-align:center;white-space:nowrap;font-family:'Liberation Sans',sans-serif;font-size:13px;line-height:16px;color:#000;font-weight:bold;-webkit-text-stroke:0.25px #000;"><span style="display:inline-block;transform:scaleX(1.06);transform-origin:center 50%">value</span></div><div style="position:absolute;left:235px;top:331px;width:101px;text-align:center;white-space:nowrap;font-family:'Liberation Sans',sans-serif;font-size:13px;line-height:16px;color:#000;font-weight:bold;-webkit-text-stroke:0.25px #000;"><span style="display:inline-block;transform:scaleX(1.06);transform-origin:center 50%">max</span></div><div style="position:absolute;left:6px;top:346px;width:24px;height:14px;background:#ff0000;"></div><div style="position:absolute;left:6px;top:346px;width:24px;text-align:center;white-space:nowrap;font-family:'Liberation Sans',sans-serif;font-size:13px;line-height:16px;color:#fff;font-weight:bold;-webkit-text-stroke:0.25px #fff;">1</div><div style="position:absolute;left:32px;top:347px;width:101px;text-align:center;white-space:nowrap;font-family:'Liberation Sans',sans-serif;font-size:12px;line-height:15px;color:#000;-webkit-text-stroke:0.15px #000;letter-spacing:0.15px;">7.000000E-001</div><div style="position:absolute;left:134px;top:347px;width:100px;text-align:center;white-space:nowrap;font-family:'Liberation Sans',sans-serif;font-size:12px;line-height:15px;color:#000;-webkit-text-stroke:0.15px #000;letter-spacing:0.15px;">1.066023E+000</div><div style="position:absolute;left:235px;top:347px;width:101px;text-align:center;white-space:nowrap;font-family:'Liberation Sans',sans-serif;font-size:12px;line-height:15px;color:#000;-webkit-text-stroke:0.15px #000;letter-spacing:0.15px;">1.324176E+000</div><div style="position:absolute;left:6px;top:360px;width:330px;height:1px;background:#8a8a8a;"></div><div style="position:absolute;left:6px;top:361px;width:24px;height:14px;background:#ff0000;"></div><div style="position:absolute;left:6px;top:361px;width:24px;text-align:center;white-space:nowrap;font-family:'Liberation Sans',sans-serif;font-size:13px;line-height:16px;color:#fff;font-weight:bold;-webkit-text-stroke:0.25px #fff;">2</div><div style="position:absolute;left:32px;top:362px;width:101px;text-align:center;white-space:nowrap;font-family:'Liberation Sans',sans-serif;font-size:12px;line-height:15px;color:#000;-webkit-text-stroke:0.15px #000;letter-spacing:0.15px;">7.000000E-001</div><div style="position:absolute;left:134px;top:362px;width:100px;text-align:center;white-space:nowrap;font-family:'Liberation Sans',sans-serif;font-size:12px;line-height:15px;color:#000;-webkit-text-stroke:0.15px #000;letter-spacing:0.15px;">1.087251E+000</div><div style="position:absolute;left:235px;top:362px;width:101px;text-align:center;white-space:nowrap;font-family:'Liberation Sans',sans-serif;font-size:12px;line-height:15px;color:#000;-webkit-text-stroke:0.15px #000;letter-spacing:0.15px;">1.417582E+000</div><div style="position:absolute;left:6px;top:375px;width:330px;height:1px;background:#8a8a8a;"></div><div style="position:absolute;left:6px;top:376px;width:24px;height:14px;background:#ff0000;"></div><div style="position:absolute;left:6px;top:376px;width:24px;text-align:center;white-space:nowrap;font-family:'Liberation Sans',sans-serif;font-size:13px;line-height:16px;color:#fff;font-weight:bold;-webkit-text-stroke:0.25px #fff;">3</div><div style="position:absolute;left:32px;top:377px;width:101px;text-align:center;white-space:nowrap;font-family:'Liberation Sans',sans-serif;font-size:12px;line-height:15px;color:#000;-webkit-text-stroke:0.15px #000;letter-spacing:0.15px;">7.000000E-001</div><div style="position:absolute;left:134px;top:377px;width:100px;text-align:center;white-space:nowrap;font-family:'Liberation Sans',sans-serif;font-size:12px;line-height:15px;color:#000;-webkit-text-stroke:0.15px #000;letter-spacing:0.15px;">2.184051E+000</div><div style="position:absolute;left:235px;top:377px;width:101px;text-align:center;white-space:nowrap;font-family:'Liberation Sans',sans-serif;font-size:12px;line-height:15px;color:#000;-webkit-text-stroke:0.15px #000;letter-spacing:0.15px;">2.357287E+000</div><div style="position:absolute;left:6px;top:390px;width:330px;height:1px;background:#8a8a8a;"></div><div style="position:absolute;left:6px;top:391px;width:24px;height:14px;background:#ff0000;"></div><div style="position:absolute;left:6px;top:391px;width:24px;text-align:center;white-space:nowrap;font-family:'Liberation Sans',sans-serif;font-size:13px;line-height:16px;color:#fff;font-weight:bold;-webkit-text-stroke:0.25px #fff;">4</div><div style="position:absolute;left:32px;top:392px;width:101px;text-align:center;white-space:nowrap;font-family:'Liberation Sans',sans-serif;font-size:12px;line-height:15px;color:#000;-webkit-text-stroke:0.15px #000;letter-spacing:0.15px;">7.000000E-001</div><div style="position:absolute;left:134px;top:392px;width:100px;text-align:center;white-space:nowrap;font-family:'Liberation Sans',sans-serif;font-size:12px;line-height:15px;color:#000;-webkit-text-stroke:0.15px #000;letter-spacing:0.15px;">1.735076E+000</div><div style="position:absolute;left:235px;top:392px;width:101px;text-align:center;white-space:nowrap;font-family:'Liberation Sans',sans-serif;font-size:12px;line-height:15px;color:#000;-webkit-text-stroke:0.15px #000;letter-spacing:0.15px;">2.000000E+000</div><div style="position:absolute;left:6px;top:405px;width:330px;height:1px;background:#8a8a8a;"></div><div style="position:absolute;left:6px;top:406px;width:24px;height:14px;background:#ff0000;"></div><div style="position:absolute;left:6px;top:406px;width:24px;text-align:center;white-space:nowrap;font-family:'Liberation Sans',sans-serif;font-size:13px;line-height:16px;color:#fff;font-weight:bold;-webkit-text-stroke:0.25px #fff;">5</div><div style="position:absolute;left:32px;top:407px;width:101px;text-align:center;white-space:nowrap;font-family:'Liberation Sans',sans-serif;font-size:12px;line-height:15px;color:#000;-webkit-text-stroke:0.15px #000;letter-spacing:0.15px;">7.479757E-001</div><div style="position:absolute;left:134px;top:407px;width:100px;text-align:center;white-space:nowrap;font-family:'Liberation Sans',sans-serif;font-size:12px;line-height:15px;color:#000;-webkit-text-stroke:0.15px #000;letter-spacing:0.15px;">8.903673E-001</div><div style="position:absolute;left:235px;top:407px;width:101px;text-align:center;white-space:nowrap;font-family:'Liberation Sans',sans-serif;font-size:12px;line-height:15px;color:#000;-webkit-text-stroke:0.15px #000;letter-spacing:0.15px;">1.962551E+000</div><div style="position:absolute;left:6px;top:420px;width:330px;height:1px;background:#8a8a8a;"></div><div style="position:absolute;left:6px;top:421px;width:24px;height:14px;background:#ff0000;"></div><div style="position:absolute;left:6px;top:421px;width:24px;text-align:center;white-space:nowrap;font-family:'Liberation Sans',sans-serif;font-size:13px;line-height:16px;color:#fff;font-weight:bold;-webkit-text-stroke:0.25px #fff;">6</div><div style="position:absolute;left:32px;top:422px;width:101px;text-align:center;white-space:nowrap;font-family:'Liberation Sans',sans-serif;font-size:12px;line-height:15px;color:#000;-webkit-text-stroke:0.15px #000;letter-spacing:0.15px;">-5.000000E+001</div><div style="position:absolute;left:134px;top:422px;width:100px;text-align:center;white-space:nowrap;font-family:'Liberation Sans',sans-serif;font-size:12px;line-height:15px;color:#000;-webkit-text-stroke:0.15px #000;letter-spacing:0.15px;">1.336829E+003</div><div style="position:absolute;left:235px;top:422px;width:101px;text-align:center;white-space:nowrap;font-family:'Liberation Sans',sans-serif;font-size:12px;line-height:15px;color:#000;-webkit-text-stroke:0.15px #000;letter-spacing:0.15px;">1.599190E+003</div><div style="position:absolute;left:6px;top:435px;width:330px;height:1px;background:#8a8a8a;"></div><div style="position:absolute;left:6px;top:436px;width:24px;height:14px;background:#ff0000;"></div><div style="position:absolute;left:6px;top:436px;width:24px;text-align:center;white-space:nowrap;font-family:'Liberation Sans',sans-serif;font-size:13px;line-height:16px;color:#fff;font-weight:bold;-webkit-text-stroke:0.25px #fff;">7</div><div style="position:absolute;left:32px;top:437px;width:101px;text-align:center;white-space:nowrap;font-family:'Liberation Sans',sans-serif;font-size:12px;line-height:15px;color:#000;-webkit-text-stroke:0.15px #000;letter-spacing:0.15px;">1.000000E-007</div><div style="position:absolute;left:134px;top:437px;width:100px;text-align:center;white-space:nowrap;font-family:'Liberation Sans',sans-serif;font-size:12px;line-height:15px;color:#000;-webkit-text-stroke:0.15px #000;letter-spacing:0.15px;">3.332945E-003</div><div style="position:absolute;left:235px;top:437px;width:101px;text-align:center;white-space:nowrap;font-family:'Liberation Sans',sans-serif;font-size:12px;line-height:15px;color:#000;-webkit-text-stroke:0.15px #000;letter-spacing:0.15px;">1.000000E+003</div><div style="position:absolute;left:6px;top:450px;width:330px;height:1px;background:#8a8a8a;"></div><div style="position:absolute;left:6px;top:451px;width:24px;height:14px;background:#ff0000;"></div><div style="position:absolute;left:6px;top:451px;width:24px;text-align:center;white-space:nowrap;font-family:'Liberation Sans',sans-serif;font-size:13px;line-height:16px;color:#fff;font-weight:bold;-webkit-text-stroke:0.25px #fff;">8</div><div style="position:absolute;left:32px;top:452px;width:101px;text-align:center;white-space:nowrap;font-family:'Liberation Sans',sans-serif;font-size:12px;line-height:15px;color:#000;-webkit-text-stroke:0.15px #000;letter-spacing:0.15px;">1.000000E+011</div><div style="position:absolute;left:134px;top:452px;width:100px;text-align:center;white-space:nowrap;font-family:'Liberation Sans',sans-serif;font-size:12px;line-height:15px;color:#000;-webkit-text-stroke:0.15px #000;letter-spacing:0.15px;">1.311510E+013</div><div style="position:absolute;left:235px;top:452px;width:101px;text-align:center;white-space:nowrap;font-family:'Liberation Sans',sans-serif;font-size:12px;line-height:15px;color:#000;-webkit-text-stroke:0.15px #000;letter-spacing:0.15px;">1.000000E+021</div><div style="position:absolute;left:6px;top:465px;width:330px;height:1px;background:#8a8a8a;"></div><div style="position:absolute;left:6px;top:466px;width:24px;height:14px;background:#ff0000;"></div><div style="position:absolute;left:6px;top:466px;width:24px;text-align:center;white-space:nowrap;font-family:'Liberation Sans',sans-serif;font-size:13px;line-height:16px;color:#fff;font-weight:bold;-webkit-text-stroke:0.25px #fff;">9</div><div style="position:absolute;left:32px;top:467px;width:101px;text-align:center;white-space:nowrap;font-family:'Liberation Sans',sans-serif;font-size:12px;line-height:15px;color:#ff0000;-webkit-text-stroke:0.15px #ff0000;letter-spacing:0.15px;">1.000000E-003</div><div style="position:absolute;left:134px;top:467px;width:100px;text-align:center;white-space:nowrap;font-family:'Liberation Sans',sans-serif;font-size:12px;line-height:15px;color:#ff0000;-webkit-text-stroke:0.15px #ff0000;letter-spacing:0.15px;">-1.698187E-002</div><div style="position:absolute;left:235px;top:467px;width:101px;text-align:center;white-space:nowrap;font-family:'Liberation Sans',sans-serif;font-size:12px;line-height:15px;color:#000;-webkit-text-stroke:0.15px #000;letter-spacing:0.15px;">9.473684E-001</div><div style="position:absolute;left:6px;top:480px;width:330px;height:1px;background:#8a8a8a;"></div><div style="position:absolute;left:6px;top:481px;width:24px;height:14px;background:#ff0000;"></div><div style="position:absolute;left:6px;top:481px;width:24px;text-align:center;white-space:nowrap;font-family:'Liberation Sans',sans-serif;font-size:13px;line-height:16px;color:#fff;font-weight:bold;-webkit-text-stroke:0.25px #fff;">10</div><div style="position:absolute;left:32px;top:482px;width:101px;text-align:center;white-space:nowrap;font-family:'Liberation Sans',sans-serif;font-size:12px;line-height:15px;color:#000;-webkit-text-stroke:0.15px #000;letter-spacing:0.15px;">1.000000E+011</div><div style="position:absolute;left:134px;top:482px;width:100px;text-align:center;white-space:nowrap;font-family:'Liberation Sans',sans-serif;font-size:12px;line-height:15px;color:#000;-webkit-text-stroke:0.15px #000;letter-spacing:0.15px;">7.209886E+011</div><div style="position:absolute;left:235px;top:482px;width:101px;text-align:center;white-space:nowrap;font-family:'Liberation Sans',sans-serif;font-size:12px;line-height:15px;color:#000;-webkit-text-stroke:0.15px #000;letter-spacing:0.15px;">1.000000E+021</div><div style="position:absolute;left:6px;top:495px;width:330px;height:1px;background:#8a8a8a;"></div><div style="position:absolute;left:6px;top:496px;width:24px;height:14px;background:#ff0000;"></div><div style="position:absolute;left:6px;top:496px;width:24px;text-align:center;white-space:nowrap;font-family:'Liberation Sans',sans-serif;font-size:13px;line-height:16px;color:#fff;font-weight:bold;-webkit-text-stroke:0.25px #fff;">11</div><div style="position:absolute;left:32px;top:497px;width:101px;text-align:center;white-space:nowrap;font-family:'Liberation Sans',sans-serif;font-size:12px;line-height:15px;color:#ff0000;-webkit-text-stroke:0.15px #ff0000;letter-spacing:0.15px;">1.000000E-003</div><div style="position:absolute;left:134px;top:497px;width:100px;text-align:center;white-space:nowrap;font-family:'Liberation Sans',sans-serif;font-size:12px;line-height:15px;color:#ff0000;-webkit-text-stroke:0.15px #ff0000;letter-spacing:0.15px;">-2.667933E-002</div><div style="position:absolute;left:235px;top:497px;width:101px;text-align:center;white-space:nowrap;font-family:'Liberation Sans',sans-serif;font-size:12px;line-height:15px;color:#000;-webkit-text-stroke:0.15px #000;letter-spacing:0.15px;">9.950000E-001</div><div style="position:absolute;left:6px;top:510px;width:330px;height:1px;background:#8a8a8a;"></div><div style="position:absolute;left:6px;top:511px;width:24px;height:14px;background:#ff0000;"></div><div style="position:absolute;left:6px;top:511px;width:24px;text-align:center;white-space:nowrap;font-family:'Liberation Sans',sans-serif;font-size:13px;line-height:16px;color:#fff;font-weight:bold;-webkit-text-stroke:0.25px #fff;">12</div><div style="position:absolute;left:32px;top:512px;width:101px;text-align:center;white-space:nowrap;font-family:'Liberation Sans',sans-serif;font-size:12px;line-height:15px;color:#000;-webkit-text-stroke:0.15px #000;letter-spacing:0.15px;"></div><div style="position:absolute;left:134px;top:512px;width:100px;text-align:center;white-space:nowrap;font-family:'Liberation Sans',sans-serif;font-size:12px;line-height:15px;color:#000;-webkit-text-stroke:0.15px #000;letter-spacing:0.15px;"></div><div style="position:absolute;left:235px;top:512px;width:101px;text-align:center;white-space:nowrap;font-family:'Liberation Sans',sans-serif;font-size:12px;line-height:15px;color:#000;-webkit-text-stroke:0.15px #000;letter-spacing:0.15px;"></div><div style="position:absolute;left:30px;top:330px;width:2px;height:196px;background:#0000ff;"></div><div style="position:absolute;left:133px;top:330px;width:1px;height:196px;background:#8a8a8a;"></div><div style="position:absolute;left:234px;top:330px;width:1px;height:196px;background:#8a8a8a;"></div><div style="position:absolute;left:6px;top:344px;width:330px;height:2px;background:#0000ff;"></div></div><div style="position:absolute;left:863px;top:54px;width:1px;height:514px;background:#ede9d8;"></div><div style="position:absolute;left:864px;top:54px;width:16px;height:514px;background:#f4f3fc;"></div><div style="position:absolute;left:864px;top:54px;width:4px;height:514px;background:#eeedf9;"></div><div style="position:absolute;left:865px;top:56px;width:13px;height:14px;border-radius:2px;background:linear-gradient(135deg,#dde8fe,#c2d3fb 60%,#b5c9f7);border:1px solid #c9d8fb;box-sizing:border-box;width:14px;height:15px"></div><div style="position:absolute;left:865px;top:552px;width:13px;height:14px;border-radius:2px;background:linear-gradient(135deg,#dde8fe,#c2d3fb 60%,#b5c9f7);border:1px solid #c9d8fb;box-sizing:border-box;width:14px;height:15px"></div><svg style="position:absolute;left:865px;top:56px" width="14" height="15"><path d="M3.5,9.5 L7,6 L10.5,9.5" stroke="#4d6185" stroke-width="2" fill="none"/></svg><svg style="position:absolute;left:865px;top:552px" width="14" height="15"><path d="M3.5,5.5 L7,9 L10.5,5.5" stroke="#4d6185" stroke-width="2" fill="none"/></svg><div style="position:absolute;left:865px;top:73px;width:14px;height:362px;box-sizing:border-box;border:1px solid #b9cdf7;border-radius:2px;background:linear-gradient(to right,#d2defc,#c6d7fc 40%,#bcd0fa);"></div><div style="position:absolute;left:868px;top:250px;width:8px;height:1px;background:#eef3fe;"></div><div style="position:absolute;left:869px;top:251px;width:8px;height:1px;background:#9cb4e8;opacity:.6"></div><div style="position:absolute;left:868px;top:252px;width:8px;height:1px;background:#eef3fe;"></div><div style="position:absolute;left:869px;top:253px;width:8px;height:1px;background:#9cb4e8;opacity:.6"></div><div style="position:absolute;left:868px;top:254px;width:8px;height:1px;background:#eef3fe;"></div><div style="position:absolute;left:869px;top:255px;width:8px;height:1px;background:#9cb4e8;opacity:.6"></div><div style="position:absolute;left:868px;top:256px;width:8px;height:1px;background:#eef3fe;"></div><div style="position:absolute;left:869px;top:257px;width:8px;height:1px;background:#9cb4e8;opacity:.6"></div></div></body></html>
